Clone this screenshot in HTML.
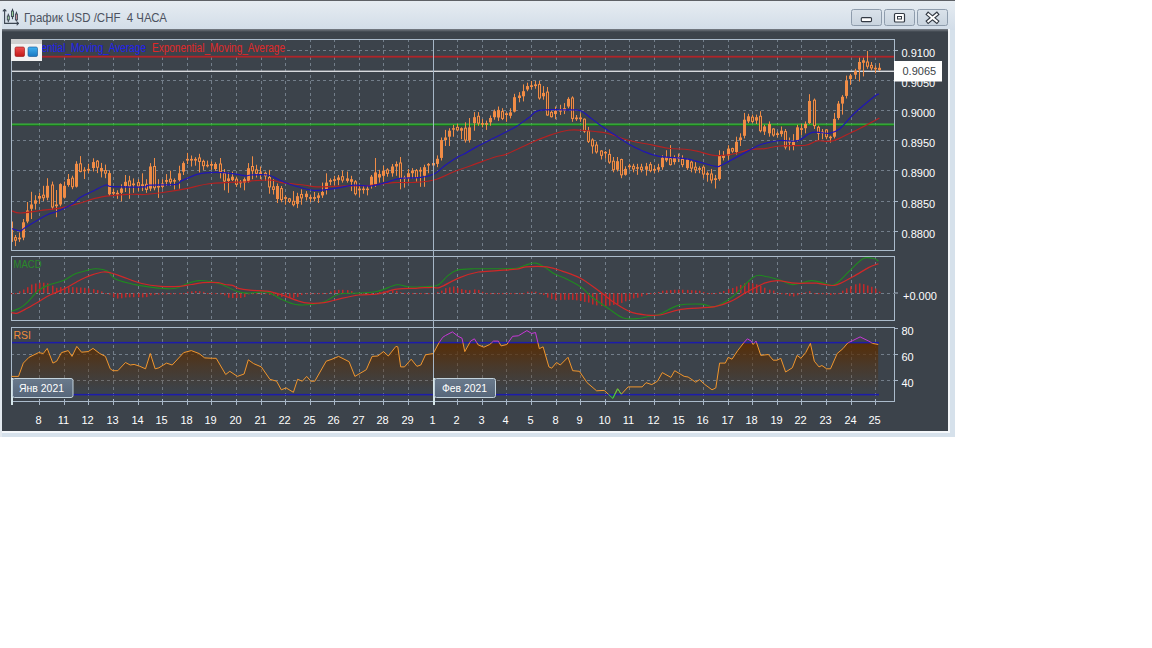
<!DOCTYPE html>
<html><head><meta charset="utf-8"><title>USD/CHF</title>
<style>html,body{margin:0;padding:0;background:#fff;width:1152px;height:648px;overflow:hidden;position:relative;font-family:"Liberation Sans", sans-serif}</style>
</head><body>
<svg width="1152" height="648" viewBox="0 0 1152 648" style="position:absolute;left:0;top:0;display:block"><defs><linearGradient id="tb" x1="0" y1="0" x2="0" y2="1"><stop offset="0" stop-color="#e6ecf2"/><stop offset="1" stop-color="#d2dde8"/></linearGradient><linearGradient id="btn" x1="0" y1="0" x2="0" y2="1"><stop offset="0" stop-color="#dae2ea"/><stop offset="1" stop-color="#c9d4df"/></linearGradient><linearGradient id="rsifill" gradientUnits="userSpaceOnUse" x1="0" y1="342" x2="0" y2="392"><stop offset="0" stop-color="#582e06" stop-opacity="1"/><stop offset="0.5" stop-color="#582e06" stop-opacity="0.45"/><stop offset="1" stop-color="#582e06" stop-opacity="0"/></linearGradient><linearGradient id="datebox" x1="0" y1="0" x2="0" y2="1"><stop offset="0" stop-color="#6a7a8c"/><stop offset="1" stop-color="#56667a"/></linearGradient><linearGradient id="shadow" x1="0" y1="0" x2="0" y2="1"><stop offset="0" stop-color="#7a8088"/><stop offset="1" stop-color="#3c434b"/></linearGradient><linearGradient id="redsq" x1="0" y1="0" x2="0" y2="1"><stop offset="0" stop-color="#f05050"/><stop offset="1" stop-color="#c01818"/></linearGradient><linearGradient id="bluesq" x1="0" y1="0" x2="0" y2="1"><stop offset="0" stop-color="#40b0f0"/><stop offset="1" stop-color="#1a78c0"/></linearGradient><clipPath id="mainclip"><rect x="12" y="39.5" width="883" height="211"/></clipPath><clipPath id="rsiclip"><rect x="12" y="342.6" width="883" height="58"/></clipPath></defs><rect x="0" y="0" width="1152" height="648" fill="#ffffff"/><rect x="0" y="0" width="955" height="437" fill="#d6e1eb"/><rect x="0" y="1" width="955" height="29" fill="url(#tb)"/><rect x="0" y="0" width="955" height="1" fill="#5e6166"/><rect x="0" y="1" width="2" height="436" fill="#e4eaf0"/><rect x="2" y="29" width="948" height="404" fill="#f4f7fa"/><rect x="2" y="29" width="946" height="402" fill="#3c434b"/><rect x="2" y="29" width="946" height="3" fill="url(#shadow)"/><line x1="39.5" y1="40" x2="39.5" y2="250" stroke="#737e8a" stroke-width="1" stroke-dasharray="3,3" stroke-dashoffset="1"/><line x1="64.5" y1="40" x2="64.5" y2="250" stroke="#737e8a" stroke-width="1" stroke-dasharray="3,3" stroke-dashoffset="1"/><line x1="88.5" y1="40" x2="88.5" y2="250" stroke="#737e8a" stroke-width="1" stroke-dasharray="3,3" stroke-dashoffset="1"/><line x1="113.5" y1="40" x2="113.5" y2="250" stroke="#737e8a" stroke-width="1" stroke-dasharray="3,3" stroke-dashoffset="1"/><line x1="138.5" y1="40" x2="138.5" y2="250" stroke="#737e8a" stroke-width="1" stroke-dasharray="3,3" stroke-dashoffset="1"/><line x1="162.5" y1="40" x2="162.5" y2="250" stroke="#737e8a" stroke-width="1" stroke-dasharray="3,3" stroke-dashoffset="1"/><line x1="187.5" y1="40" x2="187.5" y2="250" stroke="#737e8a" stroke-width="1" stroke-dasharray="3,3" stroke-dashoffset="1"/><line x1="211.5" y1="40" x2="211.5" y2="250" stroke="#737e8a" stroke-width="1" stroke-dasharray="3,3" stroke-dashoffset="1"/><line x1="236.5" y1="40" x2="236.5" y2="250" stroke="#737e8a" stroke-width="1" stroke-dasharray="3,3" stroke-dashoffset="1"/><line x1="261.5" y1="40" x2="261.5" y2="250" stroke="#737e8a" stroke-width="1" stroke-dasharray="3,3" stroke-dashoffset="1"/><line x1="285.5" y1="40" x2="285.5" y2="250" stroke="#737e8a" stroke-width="1" stroke-dasharray="3,3" stroke-dashoffset="1"/><line x1="310.5" y1="40" x2="310.5" y2="250" stroke="#737e8a" stroke-width="1" stroke-dasharray="3,3" stroke-dashoffset="1"/><line x1="334.5" y1="40" x2="334.5" y2="250" stroke="#737e8a" stroke-width="1" stroke-dasharray="3,3" stroke-dashoffset="1"/><line x1="359.5" y1="40" x2="359.5" y2="250" stroke="#737e8a" stroke-width="1" stroke-dasharray="3,3" stroke-dashoffset="1"/><line x1="383.5" y1="40" x2="383.5" y2="250" stroke="#737e8a" stroke-width="1" stroke-dasharray="3,3" stroke-dashoffset="1"/><line x1="408.5" y1="40" x2="408.5" y2="250" stroke="#737e8a" stroke-width="1" stroke-dasharray="3,3" stroke-dashoffset="1"/><line x1="433.5" y1="40" x2="433.5" y2="250" stroke="#737e8a" stroke-width="1" stroke-dasharray="3,3" stroke-dashoffset="1"/><line x1="457.5" y1="40" x2="457.5" y2="250" stroke="#737e8a" stroke-width="1" stroke-dasharray="3,3" stroke-dashoffset="1"/><line x1="482.5" y1="40" x2="482.5" y2="250" stroke="#737e8a" stroke-width="1" stroke-dasharray="3,3" stroke-dashoffset="1"/><line x1="506.5" y1="40" x2="506.5" y2="250" stroke="#737e8a" stroke-width="1" stroke-dasharray="3,3" stroke-dashoffset="1"/><line x1="531.5" y1="40" x2="531.5" y2="250" stroke="#737e8a" stroke-width="1" stroke-dasharray="3,3" stroke-dashoffset="1"/><line x1="556.5" y1="40" x2="556.5" y2="250" stroke="#737e8a" stroke-width="1" stroke-dasharray="3,3" stroke-dashoffset="1"/><line x1="580.5" y1="40" x2="580.5" y2="250" stroke="#737e8a" stroke-width="1" stroke-dasharray="3,3" stroke-dashoffset="1"/><line x1="605.5" y1="40" x2="605.5" y2="250" stroke="#737e8a" stroke-width="1" stroke-dasharray="3,3" stroke-dashoffset="1"/><line x1="629.5" y1="40" x2="629.5" y2="250" stroke="#737e8a" stroke-width="1" stroke-dasharray="3,3" stroke-dashoffset="1"/><line x1="654.5" y1="40" x2="654.5" y2="250" stroke="#737e8a" stroke-width="1" stroke-dasharray="3,3" stroke-dashoffset="1"/><line x1="679.5" y1="40" x2="679.5" y2="250" stroke="#737e8a" stroke-width="1" stroke-dasharray="3,3" stroke-dashoffset="1"/><line x1="703.5" y1="40" x2="703.5" y2="250" stroke="#737e8a" stroke-width="1" stroke-dasharray="3,3" stroke-dashoffset="1"/><line x1="728.5" y1="40" x2="728.5" y2="250" stroke="#737e8a" stroke-width="1" stroke-dasharray="3,3" stroke-dashoffset="1"/><line x1="752.5" y1="40" x2="752.5" y2="250" stroke="#737e8a" stroke-width="1" stroke-dasharray="3,3" stroke-dashoffset="1"/><line x1="777.5" y1="40" x2="777.5" y2="250" stroke="#737e8a" stroke-width="1" stroke-dasharray="3,3" stroke-dashoffset="1"/><line x1="801.5" y1="40" x2="801.5" y2="250" stroke="#737e8a" stroke-width="1" stroke-dasharray="3,3" stroke-dashoffset="1"/><line x1="826.5" y1="40" x2="826.5" y2="250" stroke="#737e8a" stroke-width="1" stroke-dasharray="3,3" stroke-dashoffset="1"/><line x1="851.5" y1="40" x2="851.5" y2="250" stroke="#737e8a" stroke-width="1" stroke-dasharray="3,3" stroke-dashoffset="1"/><line x1="875.5" y1="40" x2="875.5" y2="250" stroke="#737e8a" stroke-width="1" stroke-dasharray="3,3" stroke-dashoffset="1"/><line x1="12" y1="50.5" x2="895" y2="50.5" stroke="#737e8a" stroke-width="1" stroke-dasharray="3,3" stroke-dashoffset="1"/><line x1="12" y1="80.5" x2="895" y2="80.5" stroke="#737e8a" stroke-width="1" stroke-dasharray="3,3" stroke-dashoffset="1"/><line x1="12" y1="110.5" x2="895" y2="110.5" stroke="#737e8a" stroke-width="1" stroke-dasharray="3,3" stroke-dashoffset="1"/><line x1="12" y1="140.5" x2="895" y2="140.5" stroke="#737e8a" stroke-width="1" stroke-dasharray="3,3" stroke-dashoffset="1"/><line x1="12" y1="170.5" x2="895" y2="170.5" stroke="#737e8a" stroke-width="1" stroke-dasharray="3,3" stroke-dashoffset="1"/><line x1="12" y1="201.5" x2="895" y2="201.5" stroke="#737e8a" stroke-width="1" stroke-dasharray="3,3" stroke-dashoffset="1"/><line x1="12" y1="231.5" x2="895" y2="231.5" stroke="#737e8a" stroke-width="1" stroke-dasharray="3,3" stroke-dashoffset="1"/><line x1="39.5" y1="257" x2="39.5" y2="320" stroke="#737e8a" stroke-width="1" stroke-dasharray="3,3" stroke-dashoffset="1"/><line x1="64.5" y1="257" x2="64.5" y2="320" stroke="#737e8a" stroke-width="1" stroke-dasharray="3,3" stroke-dashoffset="1"/><line x1="88.5" y1="257" x2="88.5" y2="320" stroke="#737e8a" stroke-width="1" stroke-dasharray="3,3" stroke-dashoffset="1"/><line x1="113.5" y1="257" x2="113.5" y2="320" stroke="#737e8a" stroke-width="1" stroke-dasharray="3,3" stroke-dashoffset="1"/><line x1="138.5" y1="257" x2="138.5" y2="320" stroke="#737e8a" stroke-width="1" stroke-dasharray="3,3" stroke-dashoffset="1"/><line x1="162.5" y1="257" x2="162.5" y2="320" stroke="#737e8a" stroke-width="1" stroke-dasharray="3,3" stroke-dashoffset="1"/><line x1="187.5" y1="257" x2="187.5" y2="320" stroke="#737e8a" stroke-width="1" stroke-dasharray="3,3" stroke-dashoffset="1"/><line x1="211.5" y1="257" x2="211.5" y2="320" stroke="#737e8a" stroke-width="1" stroke-dasharray="3,3" stroke-dashoffset="1"/><line x1="236.5" y1="257" x2="236.5" y2="320" stroke="#737e8a" stroke-width="1" stroke-dasharray="3,3" stroke-dashoffset="1"/><line x1="261.5" y1="257" x2="261.5" y2="320" stroke="#737e8a" stroke-width="1" stroke-dasharray="3,3" stroke-dashoffset="1"/><line x1="285.5" y1="257" x2="285.5" y2="320" stroke="#737e8a" stroke-width="1" stroke-dasharray="3,3" stroke-dashoffset="1"/><line x1="310.5" y1="257" x2="310.5" y2="320" stroke="#737e8a" stroke-width="1" stroke-dasharray="3,3" stroke-dashoffset="1"/><line x1="334.5" y1="257" x2="334.5" y2="320" stroke="#737e8a" stroke-width="1" stroke-dasharray="3,3" stroke-dashoffset="1"/><line x1="359.5" y1="257" x2="359.5" y2="320" stroke="#737e8a" stroke-width="1" stroke-dasharray="3,3" stroke-dashoffset="1"/><line x1="383.5" y1="257" x2="383.5" y2="320" stroke="#737e8a" stroke-width="1" stroke-dasharray="3,3" stroke-dashoffset="1"/><line x1="408.5" y1="257" x2="408.5" y2="320" stroke="#737e8a" stroke-width="1" stroke-dasharray="3,3" stroke-dashoffset="1"/><line x1="433.5" y1="257" x2="433.5" y2="320" stroke="#737e8a" stroke-width="1" stroke-dasharray="3,3" stroke-dashoffset="1"/><line x1="457.5" y1="257" x2="457.5" y2="320" stroke="#737e8a" stroke-width="1" stroke-dasharray="3,3" stroke-dashoffset="1"/><line x1="482.5" y1="257" x2="482.5" y2="320" stroke="#737e8a" stroke-width="1" stroke-dasharray="3,3" stroke-dashoffset="1"/><line x1="506.5" y1="257" x2="506.5" y2="320" stroke="#737e8a" stroke-width="1" stroke-dasharray="3,3" stroke-dashoffset="1"/><line x1="531.5" y1="257" x2="531.5" y2="320" stroke="#737e8a" stroke-width="1" stroke-dasharray="3,3" stroke-dashoffset="1"/><line x1="556.5" y1="257" x2="556.5" y2="320" stroke="#737e8a" stroke-width="1" stroke-dasharray="3,3" stroke-dashoffset="1"/><line x1="580.5" y1="257" x2="580.5" y2="320" stroke="#737e8a" stroke-width="1" stroke-dasharray="3,3" stroke-dashoffset="1"/><line x1="605.5" y1="257" x2="605.5" y2="320" stroke="#737e8a" stroke-width="1" stroke-dasharray="3,3" stroke-dashoffset="1"/><line x1="629.5" y1="257" x2="629.5" y2="320" stroke="#737e8a" stroke-width="1" stroke-dasharray="3,3" stroke-dashoffset="1"/><line x1="654.5" y1="257" x2="654.5" y2="320" stroke="#737e8a" stroke-width="1" stroke-dasharray="3,3" stroke-dashoffset="1"/><line x1="679.5" y1="257" x2="679.5" y2="320" stroke="#737e8a" stroke-width="1" stroke-dasharray="3,3" stroke-dashoffset="1"/><line x1="703.5" y1="257" x2="703.5" y2="320" stroke="#737e8a" stroke-width="1" stroke-dasharray="3,3" stroke-dashoffset="1"/><line x1="728.5" y1="257" x2="728.5" y2="320" stroke="#737e8a" stroke-width="1" stroke-dasharray="3,3" stroke-dashoffset="1"/><line x1="752.5" y1="257" x2="752.5" y2="320" stroke="#737e8a" stroke-width="1" stroke-dasharray="3,3" stroke-dashoffset="1"/><line x1="777.5" y1="257" x2="777.5" y2="320" stroke="#737e8a" stroke-width="1" stroke-dasharray="3,3" stroke-dashoffset="1"/><line x1="801.5" y1="257" x2="801.5" y2="320" stroke="#737e8a" stroke-width="1" stroke-dasharray="3,3" stroke-dashoffset="1"/><line x1="826.5" y1="257" x2="826.5" y2="320" stroke="#737e8a" stroke-width="1" stroke-dasharray="3,3" stroke-dashoffset="1"/><line x1="851.5" y1="257" x2="851.5" y2="320" stroke="#737e8a" stroke-width="1" stroke-dasharray="3,3" stroke-dashoffset="1"/><line x1="875.5" y1="257" x2="875.5" y2="320" stroke="#737e8a" stroke-width="1" stroke-dasharray="3,3" stroke-dashoffset="1"/><line x1="39.5" y1="328" x2="39.5" y2="400" stroke="#737e8a" stroke-width="1" stroke-dasharray="3,3" stroke-dashoffset="1"/><line x1="64.5" y1="328" x2="64.5" y2="400" stroke="#737e8a" stroke-width="1" stroke-dasharray="3,3" stroke-dashoffset="1"/><line x1="88.5" y1="328" x2="88.5" y2="400" stroke="#737e8a" stroke-width="1" stroke-dasharray="3,3" stroke-dashoffset="1"/><line x1="113.5" y1="328" x2="113.5" y2="400" stroke="#737e8a" stroke-width="1" stroke-dasharray="3,3" stroke-dashoffset="1"/><line x1="138.5" y1="328" x2="138.5" y2="400" stroke="#737e8a" stroke-width="1" stroke-dasharray="3,3" stroke-dashoffset="1"/><line x1="162.5" y1="328" x2="162.5" y2="400" stroke="#737e8a" stroke-width="1" stroke-dasharray="3,3" stroke-dashoffset="1"/><line x1="187.5" y1="328" x2="187.5" y2="400" stroke="#737e8a" stroke-width="1" stroke-dasharray="3,3" stroke-dashoffset="1"/><line x1="211.5" y1="328" x2="211.5" y2="400" stroke="#737e8a" stroke-width="1" stroke-dasharray="3,3" stroke-dashoffset="1"/><line x1="236.5" y1="328" x2="236.5" y2="400" stroke="#737e8a" stroke-width="1" stroke-dasharray="3,3" stroke-dashoffset="1"/><line x1="261.5" y1="328" x2="261.5" y2="400" stroke="#737e8a" stroke-width="1" stroke-dasharray="3,3" stroke-dashoffset="1"/><line x1="285.5" y1="328" x2="285.5" y2="400" stroke="#737e8a" stroke-width="1" stroke-dasharray="3,3" stroke-dashoffset="1"/><line x1="310.5" y1="328" x2="310.5" y2="400" stroke="#737e8a" stroke-width="1" stroke-dasharray="3,3" stroke-dashoffset="1"/><line x1="334.5" y1="328" x2="334.5" y2="400" stroke="#737e8a" stroke-width="1" stroke-dasharray="3,3" stroke-dashoffset="1"/><line x1="359.5" y1="328" x2="359.5" y2="400" stroke="#737e8a" stroke-width="1" stroke-dasharray="3,3" stroke-dashoffset="1"/><line x1="383.5" y1="328" x2="383.5" y2="400" stroke="#737e8a" stroke-width="1" stroke-dasharray="3,3" stroke-dashoffset="1"/><line x1="408.5" y1="328" x2="408.5" y2="400" stroke="#737e8a" stroke-width="1" stroke-dasharray="3,3" stroke-dashoffset="1"/><line x1="433.5" y1="328" x2="433.5" y2="400" stroke="#737e8a" stroke-width="1" stroke-dasharray="3,3" stroke-dashoffset="1"/><line x1="457.5" y1="328" x2="457.5" y2="400" stroke="#737e8a" stroke-width="1" stroke-dasharray="3,3" stroke-dashoffset="1"/><line x1="482.5" y1="328" x2="482.5" y2="400" stroke="#737e8a" stroke-width="1" stroke-dasharray="3,3" stroke-dashoffset="1"/><line x1="506.5" y1="328" x2="506.5" y2="400" stroke="#737e8a" stroke-width="1" stroke-dasharray="3,3" stroke-dashoffset="1"/><line x1="531.5" y1="328" x2="531.5" y2="400" stroke="#737e8a" stroke-width="1" stroke-dasharray="3,3" stroke-dashoffset="1"/><line x1="556.5" y1="328" x2="556.5" y2="400" stroke="#737e8a" stroke-width="1" stroke-dasharray="3,3" stroke-dashoffset="1"/><line x1="580.5" y1="328" x2="580.5" y2="400" stroke="#737e8a" stroke-width="1" stroke-dasharray="3,3" stroke-dashoffset="1"/><line x1="605.5" y1="328" x2="605.5" y2="400" stroke="#737e8a" stroke-width="1" stroke-dasharray="3,3" stroke-dashoffset="1"/><line x1="629.5" y1="328" x2="629.5" y2="400" stroke="#737e8a" stroke-width="1" stroke-dasharray="3,3" stroke-dashoffset="1"/><line x1="654.5" y1="328" x2="654.5" y2="400" stroke="#737e8a" stroke-width="1" stroke-dasharray="3,3" stroke-dashoffset="1"/><line x1="679.5" y1="328" x2="679.5" y2="400" stroke="#737e8a" stroke-width="1" stroke-dasharray="3,3" stroke-dashoffset="1"/><line x1="703.5" y1="328" x2="703.5" y2="400" stroke="#737e8a" stroke-width="1" stroke-dasharray="3,3" stroke-dashoffset="1"/><line x1="728.5" y1="328" x2="728.5" y2="400" stroke="#737e8a" stroke-width="1" stroke-dasharray="3,3" stroke-dashoffset="1"/><line x1="752.5" y1="328" x2="752.5" y2="400" stroke="#737e8a" stroke-width="1" stroke-dasharray="3,3" stroke-dashoffset="1"/><line x1="777.5" y1="328" x2="777.5" y2="400" stroke="#737e8a" stroke-width="1" stroke-dasharray="3,3" stroke-dashoffset="1"/><line x1="801.5" y1="328" x2="801.5" y2="400" stroke="#737e8a" stroke-width="1" stroke-dasharray="3,3" stroke-dashoffset="1"/><line x1="826.5" y1="328" x2="826.5" y2="400" stroke="#737e8a" stroke-width="1" stroke-dasharray="3,3" stroke-dashoffset="1"/><line x1="851.5" y1="328" x2="851.5" y2="400" stroke="#737e8a" stroke-width="1" stroke-dasharray="3,3" stroke-dashoffset="1"/><line x1="875.5" y1="328" x2="875.5" y2="400" stroke="#737e8a" stroke-width="1" stroke-dasharray="3,3" stroke-dashoffset="1"/><line x1="12" y1="354.5" x2="895" y2="354.5" stroke="#737e8a" stroke-width="1" stroke-dasharray="3,3" stroke-dashoffset="1"/><line x1="12" y1="380.5" x2="895" y2="380.5" stroke="#737e8a" stroke-width="1" stroke-dasharray="3,3" stroke-dashoffset="1"/><rect x="12" y="55.8" width="883" height="1.8" fill="#b02428"/><rect x="12" y="70.6" width="883" height="1.4" fill="#d8dade"/><rect x="12" y="123.6" width="883" height="1.2" fill="#3ccc3c"/><rect x="12" y="124.8" width="883" height="0.9" fill="#127e12"/><g clip-path="url(#mainclip)"><rect x="11" y="219.8" width="1" height="23.8" fill="#f08c46"/><rect x="10" y="221.5" width="3" height="20.4" fill="#f08c46"/><rect x="15" y="235.0" width="1" height="11.1" fill="#f08c46"/><rect x="14.5" y="237.6" width="2" height="2.6" fill="none" stroke="#f08c46" stroke-width="1"/><rect x="15" y="238.1" width="1" height="1.6" fill="#5a4030"/><rect x="19" y="232.5" width="1" height="9.4" fill="#f08c46"/><rect x="18" y="237.6" width="3" height="1.7" fill="#f08c46"/><rect x="23" y="219.0" width="1" height="21.2" fill="#f08c46"/><rect x="22" y="222.3" width="3" height="15.3" fill="#f08c46"/><rect x="27" y="202.0" width="1" height="21.2" fill="#f08c46"/><rect x="26" y="210.5" width="3" height="11.0" fill="#f08c46"/><rect x="31" y="191.8" width="1" height="27.2" fill="#f08c46"/><rect x="30" y="204.5" width="3" height="4.3" fill="#f08c46"/><rect x="35" y="195.2" width="1" height="14.4" fill="#f08c46"/><rect x="34" y="200.3" width="3" height="3.4" fill="#f08c46"/><rect x="39" y="192.6" width="1" height="11.1" fill="#f08c46"/><rect x="38" y="196.0" width="3" height="2.6" fill="#f08c46"/><rect x="43" y="185.8" width="1" height="15.3" fill="#f08c46"/><rect x="42.5" y="195.2" width="2" height="2.5" fill="none" stroke="#f08c46" stroke-width="1"/><rect x="43" y="195.7" width="1" height="1.5" fill="#5a4030"/><rect x="47" y="178.2" width="1" height="22.1" fill="#f08c46"/><rect x="46" y="185.8" width="3" height="11.9" fill="#f08c46"/><rect x="52" y="181.6" width="1" height="28.0" fill="#f08c46"/><rect x="51.5" y="185.0" width="2" height="22.0" fill="none" stroke="#f08c46" stroke-width="1"/><rect x="52" y="185.5" width="1" height="21.0" fill="#5a4030"/><rect x="56" y="190.0" width="1" height="27.2" fill="#f08c46"/><rect x="55" y="204.5" width="3" height="1.7" fill="#f08c46"/><rect x="60" y="183.3" width="1" height="22.9" fill="#f08c46"/><rect x="59" y="184.1" width="3" height="20.4" fill="#f08c46"/><rect x="64" y="181.6" width="1" height="17.0" fill="#f08c46"/><rect x="63" y="185.8" width="3" height="11.9" fill="#f08c46"/><rect x="68" y="174.0" width="1" height="12.7" fill="#f08c46"/><rect x="67" y="179.0" width="3" height="6.0" fill="#f08c46"/><rect x="72" y="175.7" width="1" height="13.5" fill="#f08c46"/><rect x="71.5" y="178.2" width="2" height="8.5" fill="none" stroke="#f08c46" stroke-width="1"/><rect x="72" y="178.7" width="1" height="7.5" fill="#5a4030"/><rect x="76" y="161.2" width="1" height="26.3" fill="#f08c46"/><rect x="75" y="163.8" width="3" height="22.9" fill="#f08c46"/><rect x="80" y="156.1" width="1" height="16.2" fill="#f08c46"/><rect x="79.5" y="163.8" width="2" height="7.6" fill="none" stroke="#f08c46" stroke-width="1"/><rect x="80" y="164.3" width="1" height="6.6" fill="#5a4030"/><rect x="84" y="167.2" width="1" height="11.8" fill="#f08c46"/><rect x="83" y="169.7" width="3" height="1.5" fill="#f08c46"/><rect x="88" y="163.8" width="1" height="9.3" fill="#f08c46"/><rect x="87" y="168.9" width="3" height="1.7" fill="#f08c46"/><rect x="93" y="158.3" width="1" height="13.1" fill="#f08c46"/><rect x="92" y="162.1" width="3" height="5.9" fill="#f08c46"/><rect x="97" y="160.0" width="1" height="13.1" fill="#f08c46"/><rect x="96.5" y="161.2" width="2" height="6.0" fill="none" stroke="#f08c46" stroke-width="1"/><rect x="97" y="161.7" width="1" height="5.0" fill="#5a4030"/><rect x="101" y="162.9" width="1" height="14.5" fill="#f08c46"/><rect x="100" y="168.0" width="3" height="3.4" fill="#f08c46"/><rect x="105" y="164.6" width="1" height="13.6" fill="#f08c46"/><rect x="104.5" y="170.6" width="2" height="2.5" fill="none" stroke="#f08c46" stroke-width="1"/><rect x="105" y="171.1" width="1" height="1.5" fill="#5a4030"/><rect x="109" y="170.6" width="1" height="25.4" fill="#f08c46"/><rect x="108" y="173.1" width="3" height="21.2" fill="#f08c46"/><rect x="113" y="188.6" width="1" height="6.8" fill="#f08c46"/><rect x="112" y="192.0" width="3" height="1.7" fill="#f08c46"/><rect x="117" y="190.3" width="1" height="8.5" fill="#f08c46"/><rect x="116" y="192.8" width="3" height="1.7" fill="#f08c46"/><rect x="121" y="184.3" width="1" height="17.0" fill="#f08c46"/><rect x="120" y="188.6" width="3" height="4.2" fill="#f08c46"/><rect x="125" y="175.0" width="1" height="17.0" fill="#f08c46"/><rect x="124" y="181.8" width="3" height="4.2" fill="#f08c46"/><rect x="129" y="175.8" width="1" height="23.0" fill="#f08c46"/><rect x="128.5" y="181.0" width="2" height="5.0" fill="none" stroke="#f08c46" stroke-width="1"/><rect x="129" y="181.5" width="1" height="4.0" fill="#5a4030"/><rect x="133" y="178.4" width="1" height="14.4" fill="#f08c46"/><rect x="132" y="183.5" width="3" height="1.7" fill="#f08c46"/><rect x="138" y="179.2" width="1" height="11.9" fill="#f08c46"/><rect x="137.5" y="182.6" width="2" height="3.4" fill="none" stroke="#f08c46" stroke-width="1"/><rect x="138" y="183.1" width="1" height="2.4" fill="#5a4030"/><rect x="142" y="173.3" width="1" height="17.8" fill="#f08c46"/><rect x="141" y="184.3" width="3" height="1.7" fill="#f08c46"/><rect x="146" y="179.2" width="1" height="13.6" fill="#f08c46"/><rect x="145.5" y="184.3" width="2" height="5.1" fill="none" stroke="#f08c46" stroke-width="1"/><rect x="146" y="184.8" width="1" height="4.1" fill="#5a4030"/><rect x="150" y="163.1" width="1" height="28.0" fill="#f08c46"/><rect x="149" y="166.5" width="3" height="22.1" fill="#f08c46"/><rect x="154" y="158.0" width="1" height="32.3" fill="#f08c46"/><rect x="153.5" y="166.5" width="2" height="21.2" fill="none" stroke="#f08c46" stroke-width="1"/><rect x="154" y="167.0" width="1" height="20.2" fill="#5a4030"/><rect x="158" y="179.2" width="1" height="18.7" fill="#f08c46"/><rect x="157" y="186.0" width="3" height="1.5" fill="#f08c46"/><rect x="162" y="179.2" width="1" height="9.4" fill="#f08c46"/><rect x="161" y="183.5" width="3" height="3.4" fill="#f08c46"/><rect x="166" y="174.1" width="1" height="11.9" fill="#f08c46"/><rect x="165" y="180.1" width="3" height="1.7" fill="#f08c46"/><rect x="170" y="170.7" width="1" height="15.3" fill="#f08c46"/><rect x="169.5" y="179.2" width="2" height="2.6" fill="none" stroke="#f08c46" stroke-width="1"/><rect x="170" y="179.7" width="1" height="1.6" fill="#5a4030"/><rect x="174" y="178.4" width="1" height="11.0" fill="#f08c46"/><rect x="173" y="180.1" width="3" height="1.5" fill="#f08c46"/><rect x="179" y="165.7" width="1" height="22.9" fill="#f08c46"/><rect x="178" y="173.3" width="3" height="6.8" fill="#f08c46"/><rect x="183" y="161.4" width="1" height="13.6" fill="#f08c46"/><rect x="182" y="163.1" width="3" height="8.5" fill="#f08c46"/><rect x="187" y="152.9" width="1" height="11.1" fill="#f08c46"/><rect x="186" y="158.9" width="3" height="1.7" fill="#f08c46"/><rect x="191" y="155.5" width="1" height="11.0" fill="#f08c46"/><rect x="190" y="158.9" width="3" height="1.7" fill="#f08c46"/><rect x="195" y="157.2" width="1" height="8.5" fill="#f08c46"/><rect x="194" y="158.9" width="3" height="1.7" fill="#f08c46"/><rect x="199" y="153.8" width="1" height="18.6" fill="#f08c46"/><rect x="198.5" y="158.0" width="2" height="3.4" fill="none" stroke="#f08c46" stroke-width="1"/><rect x="199" y="158.5" width="1" height="2.4" fill="#5a4030"/><rect x="203" y="159.7" width="1" height="10.2" fill="#f08c46"/><rect x="202.5" y="161.4" width="2" height="4.3" fill="none" stroke="#f08c46" stroke-width="1"/><rect x="203" y="161.9" width="1" height="3.3" fill="#5a4030"/><rect x="207" y="160.6" width="1" height="6.8" fill="#f08c46"/><rect x="206" y="164.8" width="3" height="1.5" fill="#f08c46"/><rect x="211" y="161.4" width="1" height="8.5" fill="#f08c46"/><rect x="210" y="164.0" width="3" height="1.7" fill="#f08c46"/><rect x="215" y="162.3" width="1" height="8.4" fill="#f08c46"/><rect x="214" y="164.0" width="3" height="5.0" fill="#f08c46"/><rect x="220" y="158.0" width="1" height="20.4" fill="#f08c46"/><rect x="219.5" y="164.0" width="2" height="7.6" fill="none" stroke="#f08c46" stroke-width="1"/><rect x="220" y="164.5" width="1" height="6.6" fill="#5a4030"/><rect x="224" y="169.0" width="1" height="21.3" fill="#f08c46"/><rect x="223.5" y="173.3" width="2" height="7.7" fill="none" stroke="#f08c46" stroke-width="1"/><rect x="224" y="173.8" width="1" height="6.7" fill="#5a4030"/><rect x="228" y="172.4" width="1" height="20.4" fill="#f08c46"/><rect x="227" y="178.4" width="3" height="2.6" fill="#f08c46"/><rect x="232" y="171.6" width="1" height="9.4" fill="#f08c46"/><rect x="231" y="176.7" width="3" height="3.4" fill="#f08c46"/><rect x="236" y="176.7" width="1" height="10.2" fill="#f08c46"/><rect x="235.5" y="179.2" width="2" height="5.1" fill="none" stroke="#f08c46" stroke-width="1"/><rect x="236" y="179.7" width="1" height="4.1" fill="#5a4030"/><rect x="240" y="180.1" width="1" height="7.6" fill="#f08c46"/><rect x="239" y="181.8" width="3" height="1.5" fill="#f08c46"/><rect x="244" y="177.5" width="1" height="12.8" fill="#f08c46"/><rect x="243" y="179.2" width="3" height="3.4" fill="#f08c46"/><rect x="248" y="163.1" width="1" height="19.5" fill="#f08c46"/><rect x="247" y="168.2" width="3" height="12.7" fill="#f08c46"/><rect x="252" y="156.3" width="1" height="22.9" fill="#f08c46"/><rect x="251.5" y="166.5" width="2" height="4.2" fill="none" stroke="#f08c46" stroke-width="1"/><rect x="252" y="167.0" width="1" height="3.2" fill="#5a4030"/><rect x="256" y="164.8" width="1" height="12.7" fill="#f08c46"/><rect x="255.5" y="169.9" width="2" height="3.4" fill="none" stroke="#f08c46" stroke-width="1"/><rect x="256" y="170.4" width="1" height="2.4" fill="#5a4030"/><rect x="260" y="166.5" width="1" height="12.7" fill="#f08c46"/><rect x="259" y="172.4" width="3" height="1.7" fill="#f08c46"/><rect x="265" y="171.6" width="1" height="9.3" fill="#f08c46"/><rect x="264.5" y="173.3" width="2" height="2.5" fill="none" stroke="#f08c46" stroke-width="1"/><rect x="265" y="173.8" width="1" height="1.5" fill="#5a4030"/><rect x="269" y="169.9" width="1" height="23.8" fill="#f08c46"/><rect x="268.5" y="177.5" width="2" height="9.4" fill="none" stroke="#f08c46" stroke-width="1"/><rect x="269" y="178.0" width="1" height="8.4" fill="#5a4030"/><rect x="273" y="179.2" width="1" height="15.3" fill="#f08c46"/><rect x="272.5" y="186.9" width="2" height="2.5" fill="none" stroke="#f08c46" stroke-width="1"/><rect x="273" y="187.4" width="1" height="1.5" fill="#5a4030"/><rect x="277" y="183.5" width="1" height="19.5" fill="#f08c46"/><rect x="276" y="186.0" width="3" height="13.0" fill="#f08c46"/><rect x="281" y="186.0" width="1" height="16.2" fill="#f08c46"/><rect x="280.5" y="188.6" width="2" height="11.0" fill="none" stroke="#f08c46" stroke-width="1"/><rect x="281" y="189.1" width="1" height="10.0" fill="#5a4030"/><rect x="285" y="195.4" width="1" height="9.3" fill="#f08c46"/><rect x="284" y="197.1" width="3" height="1.7" fill="#f08c46"/><rect x="289" y="197.9" width="1" height="5.1" fill="#f08c46"/><rect x="288.5" y="198.8" width="2" height="2.5" fill="none" stroke="#f08c46" stroke-width="1"/><rect x="289" y="199.3" width="1" height="1.5" fill="#5a4030"/><rect x="293" y="191.1" width="1" height="15.3" fill="#f08c46"/><rect x="292.5" y="201.3" width="2" height="3.4" fill="none" stroke="#f08c46" stroke-width="1"/><rect x="293" y="201.8" width="1" height="2.4" fill="#5a4030"/><rect x="297" y="192.8" width="1" height="15.3" fill="#f08c46"/><rect x="296" y="196.2" width="3" height="7.7" fill="#f08c46"/><rect x="301" y="189.4" width="1" height="15.3" fill="#f08c46"/><rect x="300.5" y="194.5" width="2" height="3.4" fill="none" stroke="#f08c46" stroke-width="1"/><rect x="301" y="195.0" width="1" height="2.4" fill="#5a4030"/><rect x="306" y="191.1" width="1" height="9.4" fill="#f08c46"/><rect x="305" y="193.7" width="3" height="3.4" fill="#f08c46"/><rect x="310" y="194.5" width="1" height="7.7" fill="#f08c46"/><rect x="309" y="197.1" width="3" height="1.7" fill="#f08c46"/><rect x="314" y="192.0" width="1" height="9.3" fill="#f08c46"/><rect x="313" y="197.1" width="3" height="1.7" fill="#f08c46"/><rect x="318" y="192.8" width="1" height="10.2" fill="#f08c46"/><rect x="317" y="195.4" width="3" height="2.5" fill="#f08c46"/><rect x="322" y="182.6" width="1" height="15.3" fill="#f08c46"/><rect x="321" y="192.0" width="3" height="3.4" fill="#f08c46"/><rect x="326" y="173.3" width="1" height="21.2" fill="#f08c46"/><rect x="325" y="182.6" width="3" height="6.8" fill="#f08c46"/><rect x="330" y="178.4" width="1" height="6.8" fill="#f08c46"/><rect x="329" y="180.1" width="3" height="1.7" fill="#f08c46"/><rect x="334" y="175.8" width="1" height="9.4" fill="#f08c46"/><rect x="333" y="179.2" width="3" height="1.7" fill="#f08c46"/><rect x="338" y="175.0" width="1" height="10.2" fill="#f08c46"/><rect x="337" y="177.5" width="3" height="2.6" fill="#f08c46"/><rect x="342" y="170.7" width="1" height="11.9" fill="#f08c46"/><rect x="341.5" y="176.7" width="2" height="3.4" fill="none" stroke="#f08c46" stroke-width="1"/><rect x="342" y="177.2" width="1" height="2.4" fill="#5a4030"/><rect x="347" y="171.6" width="1" height="11.0" fill="#f08c46"/><rect x="346" y="178.4" width="3" height="2.5" fill="#f08c46"/><rect x="351" y="175.8" width="1" height="15.3" fill="#f08c46"/><rect x="350" y="179.2" width="3" height="2.6" fill="#f08c46"/><rect x="355" y="180.1" width="1" height="15.3" fill="#f08c46"/><rect x="354.5" y="181.8" width="2" height="11.9" fill="none" stroke="#f08c46" stroke-width="1"/><rect x="355" y="182.3" width="1" height="10.9" fill="#5a4030"/><rect x="359" y="185.2" width="1" height="11.9" fill="#f08c46"/><rect x="358" y="188.6" width="3" height="1.7" fill="#f08c46"/><rect x="363" y="186.0" width="1" height="7.7" fill="#f08c46"/><rect x="362" y="188.6" width="3" height="1.5" fill="#f08c46"/><rect x="367" y="185.2" width="1" height="10.2" fill="#f08c46"/><rect x="366" y="188.6" width="3" height="1.5" fill="#f08c46"/><rect x="371" y="175.0" width="1" height="13.6" fill="#f08c46"/><rect x="370" y="176.7" width="3" height="9.3" fill="#f08c46"/><rect x="375" y="158.0" width="1" height="28.9" fill="#f08c46"/><rect x="374" y="172.4" width="3" height="11.9" fill="#f08c46"/><rect x="379" y="169.9" width="1" height="12.7" fill="#f08c46"/><rect x="378" y="174.1" width="3" height="3.4" fill="#f08c46"/><rect x="383" y="165.7" width="1" height="16.1" fill="#f08c46"/><rect x="382" y="170.7" width="3" height="5.1" fill="#f08c46"/><rect x="387" y="168.2" width="1" height="8.5" fill="#f08c46"/><rect x="386.5" y="169.9" width="2" height="3.4" fill="none" stroke="#f08c46" stroke-width="1"/><rect x="387" y="170.4" width="1" height="2.4" fill="#5a4030"/><rect x="392" y="164.0" width="1" height="12.7" fill="#f08c46"/><rect x="391" y="166.5" width="3" height="6.8" fill="#f08c46"/><rect x="396" y="161.4" width="1" height="14.4" fill="#f08c46"/><rect x="395" y="164.0" width="3" height="2.5" fill="#f08c46"/><rect x="400" y="157.0" width="1" height="32.3" fill="#f08c46"/><rect x="399.5" y="163.0" width="2" height="15.3" fill="none" stroke="#f08c46" stroke-width="1"/><rect x="400" y="163.5" width="1" height="14.3" fill="#5a4030"/><rect x="404" y="175.7" width="1" height="11.9" fill="#f08c46"/><rect x="403" y="177.4" width="3" height="1.7" fill="#f08c46"/><rect x="408" y="169.0" width="1" height="12.7" fill="#f08c46"/><rect x="407" y="173.2" width="3" height="5.1" fill="#f08c46"/><rect x="412" y="168.1" width="1" height="10.2" fill="#f08c46"/><rect x="411" y="170.6" width="3" height="2.6" fill="#f08c46"/><rect x="416" y="169.0" width="1" height="12.7" fill="#f08c46"/><rect x="415.5" y="170.6" width="2" height="6.8" fill="none" stroke="#f08c46" stroke-width="1"/><rect x="416" y="171.1" width="1" height="5.8" fill="#5a4030"/><rect x="420" y="167.2" width="1" height="19.6" fill="#f08c46"/><rect x="419" y="169.8" width="3" height="1.7" fill="#f08c46"/><rect x="424" y="164.7" width="1" height="22.1" fill="#f08c46"/><rect x="423" y="167.2" width="3" height="8.5" fill="#f08c46"/><rect x="428" y="163.0" width="1" height="10.2" fill="#f08c46"/><rect x="427" y="163.9" width="3" height="1.6" fill="#f08c46"/><rect x="433" y="157.9" width="1" height="9.3" fill="#f08c46"/><rect x="432" y="163.0" width="3" height="2.5" fill="#f08c46"/><rect x="437" y="155.4" width="1" height="11.8" fill="#f08c46"/><rect x="436" y="158.8" width="3" height="5.1" fill="#f08c46"/><rect x="441" y="137.5" width="1" height="23.0" fill="#f08c46"/><rect x="440" y="140.1" width="3" height="17.8" fill="#f08c46"/><rect x="445" y="129.9" width="1" height="16.1" fill="#f08c46"/><rect x="444" y="137.5" width="3" height="2.6" fill="#f08c46"/><rect x="449" y="128.2" width="1" height="17.8" fill="#f08c46"/><rect x="448" y="130.7" width="3" height="6.0" fill="#f08c46"/><rect x="453" y="124.8" width="1" height="11.9" fill="#f08c46"/><rect x="452" y="128.2" width="3" height="1.5" fill="#f08c46"/><rect x="457" y="124.0" width="1" height="6.7" fill="#f08c46"/><rect x="456.5" y="127.4" width="2" height="2.5" fill="none" stroke="#f08c46" stroke-width="1"/><rect x="457" y="127.9" width="1" height="1.5" fill="#5a4030"/><rect x="461" y="127.4" width="1" height="11.8" fill="#f08c46"/><rect x="460" y="128.2" width="3" height="2.5" fill="#f08c46"/><rect x="465" y="122.3" width="1" height="20.3" fill="#f08c46"/><rect x="464.5" y="128.2" width="2" height="11.9" fill="none" stroke="#f08c46" stroke-width="1"/><rect x="465" y="128.7" width="1" height="10.9" fill="#5a4030"/><rect x="469" y="118.0" width="1" height="24.6" fill="#f08c46"/><rect x="468" y="127.4" width="3" height="12.7" fill="#f08c46"/><rect x="474" y="112.1" width="1" height="18.6" fill="#f08c46"/><rect x="473" y="117.2" width="3" height="5.9" fill="#f08c46"/><rect x="478" y="112.1" width="1" height="13.6" fill="#f08c46"/><rect x="477.5" y="116.3" width="2" height="6.8" fill="none" stroke="#f08c46" stroke-width="1"/><rect x="478" y="116.8" width="1" height="5.8" fill="#5a4030"/><rect x="482" y="118.9" width="1" height="8.5" fill="#f08c46"/><rect x="481" y="123.1" width="3" height="1.7" fill="#f08c46"/><rect x="486" y="120.6" width="1" height="9.3" fill="#f08c46"/><rect x="485" y="123.1" width="3" height="1.7" fill="#f08c46"/><rect x="490" y="115.5" width="1" height="10.2" fill="#f08c46"/><rect x="489" y="118.0" width="3" height="4.3" fill="#f08c46"/><rect x="494" y="109.5" width="1" height="10.2" fill="#f08c46"/><rect x="493" y="111.2" width="3" height="6.0" fill="#f08c46"/><rect x="498" y="106.5" width="1" height="14.4" fill="#f08c46"/><rect x="497" y="109.9" width="3" height="7.6" fill="#f08c46"/><rect x="502" y="108.2" width="1" height="11.9" fill="#f08c46"/><rect x="501.5" y="111.6" width="2" height="6.8" fill="none" stroke="#f08c46" stroke-width="1"/><rect x="502" y="112.1" width="1" height="5.8" fill="#5a4030"/><rect x="506" y="112.4" width="1" height="9.4" fill="#f08c46"/><rect x="505" y="113.3" width="3" height="1.7" fill="#f08c46"/><rect x="510" y="108.2" width="1" height="10.2" fill="#f08c46"/><rect x="509" y="112.4" width="3" height="3.4" fill="#f08c46"/><rect x="514" y="93.8" width="1" height="18.6" fill="#f08c46"/><rect x="513" y="97.2" width="3" height="14.4" fill="#f08c46"/><rect x="519" y="92.1" width="1" height="10.2" fill="#f08c46"/><rect x="518" y="95.5" width="3" height="2.5" fill="#f08c46"/><rect x="523" y="84.4" width="1" height="17.0" fill="#f08c46"/><rect x="522" y="91.2" width="3" height="5.1" fill="#f08c46"/><rect x="527" y="82.7" width="1" height="8.5" fill="#f08c46"/><rect x="526" y="86.1" width="3" height="3.4" fill="#f08c46"/><rect x="531" y="81.0" width="1" height="8.5" fill="#f08c46"/><rect x="530" y="85.3" width="3" height="1.7" fill="#f08c46"/><rect x="535" y="81.0" width="1" height="7.7" fill="#f08c46"/><rect x="534" y="84.4" width="3" height="1.7" fill="#f08c46"/><rect x="539" y="81.0" width="1" height="18.7" fill="#f08c46"/><rect x="538.5" y="84.4" width="2" height="13.6" fill="none" stroke="#f08c46" stroke-width="1"/><rect x="539" y="84.9" width="1" height="12.6" fill="#5a4030"/><rect x="543" y="86.1" width="1" height="13.6" fill="#f08c46"/><rect x="542" y="92.9" width="3" height="3.4" fill="#f08c46"/><rect x="547" y="87.0" width="1" height="28.8" fill="#f08c46"/><rect x="546.5" y="92.1" width="2" height="22.9" fill="none" stroke="#f08c46" stroke-width="1"/><rect x="547" y="92.6" width="1" height="21.9" fill="#5a4030"/><rect x="551" y="110.7" width="1" height="6.8" fill="#f08c46"/><rect x="550.5" y="112.4" width="2" height="4.3" fill="none" stroke="#f08c46" stroke-width="1"/><rect x="551" y="112.9" width="1" height="3.3" fill="#5a4030"/><rect x="555" y="106.5" width="1" height="12.7" fill="#f08c46"/><rect x="554" y="110.7" width="3" height="3.4" fill="#f08c46"/><rect x="560" y="104.8" width="1" height="10.2" fill="#f08c46"/><rect x="559" y="109.0" width="3" height="2.6" fill="#f08c46"/><rect x="564" y="103.1" width="1" height="11.0" fill="#f08c46"/><rect x="563" y="108.2" width="3" height="2.5" fill="#f08c46"/><rect x="568" y="97.2" width="1" height="11.0" fill="#f08c46"/><rect x="567" y="98.9" width="3" height="7.6" fill="#f08c46"/><rect x="572" y="96.3" width="1" height="25.5" fill="#f08c46"/><rect x="571.5" y="98.0" width="2" height="20.4" fill="none" stroke="#f08c46" stroke-width="1"/><rect x="572" y="98.5" width="1" height="19.4" fill="#5a4030"/><rect x="576" y="115.0" width="1" height="5.9" fill="#f08c46"/><rect x="575" y="117.5" width="3" height="1.7" fill="#f08c46"/><rect x="580" y="113.3" width="1" height="8.5" fill="#f08c46"/><rect x="579" y="117.5" width="3" height="1.7" fill="#f08c46"/><rect x="584" y="118.4" width="1" height="14.4" fill="#f08c46"/><rect x="583.5" y="119.2" width="2" height="11.9" fill="none" stroke="#f08c46" stroke-width="1"/><rect x="584" y="119.7" width="1" height="10.9" fill="#5a4030"/><rect x="588" y="126.9" width="1" height="16.1" fill="#f08c46"/><rect x="587.5" y="131.1" width="2" height="10.2" fill="none" stroke="#f08c46" stroke-width="1"/><rect x="588" y="131.6" width="1" height="9.2" fill="#5a4030"/><rect x="592" y="138.3" width="1" height="15.3" fill="#f08c46"/><rect x="591.5" y="140.0" width="2" height="5.9" fill="none" stroke="#f08c46" stroke-width="1"/><rect x="592" y="140.5" width="1" height="4.9" fill="#5a4030"/><rect x="596" y="141.7" width="1" height="11.9" fill="#f08c46"/><rect x="595.5" y="145.1" width="2" height="6.8" fill="none" stroke="#f08c46" stroke-width="1"/><rect x="596" y="145.6" width="1" height="5.8" fill="#5a4030"/><rect x="601" y="150.2" width="1" height="9.3" fill="#f08c46"/><rect x="600.5" y="151.0" width="2" height="4.3" fill="none" stroke="#f08c46" stroke-width="1"/><rect x="601" y="151.5" width="1" height="3.3" fill="#5a4030"/><rect x="605" y="151.0" width="1" height="7.7" fill="#f08c46"/><rect x="604" y="151.9" width="3" height="1.5" fill="#f08c46"/><rect x="609" y="149.3" width="1" height="14.5" fill="#f08c46"/><rect x="608.5" y="154.4" width="2" height="7.7" fill="none" stroke="#f08c46" stroke-width="1"/><rect x="609" y="154.9" width="1" height="6.7" fill="#5a4030"/><rect x="613" y="157.0" width="1" height="15.3" fill="#f08c46"/><rect x="612.5" y="161.2" width="2" height="8.5" fill="none" stroke="#f08c46" stroke-width="1"/><rect x="613" y="161.7" width="1" height="7.5" fill="#5a4030"/><rect x="617" y="157.0" width="1" height="14.4" fill="#f08c46"/><rect x="616" y="161.2" width="3" height="8.5" fill="#f08c46"/><rect x="621" y="158.7" width="1" height="19.5" fill="#f08c46"/><rect x="620.5" y="159.5" width="2" height="15.3" fill="none" stroke="#f08c46" stroke-width="1"/><rect x="621" y="160.0" width="1" height="14.3" fill="#5a4030"/><rect x="625" y="166.3" width="1" height="9.3" fill="#f08c46"/><rect x="624" y="168.9" width="3" height="5.9" fill="#f08c46"/><rect x="629" y="163.8" width="1" height="5.9" fill="#f08c46"/><rect x="628" y="165.5" width="3" height="1.7" fill="#f08c46"/><rect x="633" y="163.8" width="1" height="8.5" fill="#f08c46"/><rect x="632.5" y="166.3" width="2" height="2.6" fill="none" stroke="#f08c46" stroke-width="1"/><rect x="633" y="166.8" width="1" height="1.6" fill="#5a4030"/><rect x="637" y="163.8" width="1" height="11.0" fill="#f08c46"/><rect x="636" y="167.2" width="3" height="1.5" fill="#f08c46"/><rect x="641" y="163.8" width="1" height="8.5" fill="#f08c46"/><rect x="640.5" y="167.2" width="2" height="2.5" fill="none" stroke="#f08c46" stroke-width="1"/><rect x="641" y="167.7" width="1" height="1.5" fill="#5a4030"/><rect x="646" y="162.9" width="1" height="12.7" fill="#f08c46"/><rect x="645" y="166.3" width="3" height="3.4" fill="#f08c46"/><rect x="650" y="162.1" width="1" height="10.2" fill="#f08c46"/><rect x="649.5" y="164.6" width="2" height="6.0" fill="none" stroke="#f08c46" stroke-width="1"/><rect x="650" y="165.1" width="1" height="5.0" fill="#5a4030"/><rect x="654" y="165.5" width="1" height="7.6" fill="#f08c46"/><rect x="653" y="168.9" width="3" height="1.5" fill="#f08c46"/><rect x="658" y="163.8" width="1" height="8.5" fill="#f08c46"/><rect x="657" y="167.2" width="3" height="2.5" fill="#f08c46"/><rect x="662" y="155.3" width="1" height="14.4" fill="#f08c46"/><rect x="661" y="157.8" width="3" height="9.4" fill="#f08c46"/><rect x="666" y="150.2" width="1" height="11.9" fill="#f08c46"/><rect x="665" y="157.0" width="3" height="3.4" fill="#f08c46"/><rect x="670" y="145.1" width="1" height="20.4" fill="#f08c46"/><rect x="669.5" y="158.7" width="2" height="5.9" fill="none" stroke="#f08c46" stroke-width="1"/><rect x="670" y="159.2" width="1" height="4.9" fill="#5a4030"/><rect x="674" y="155.3" width="1" height="9.3" fill="#f08c46"/><rect x="673" y="157.8" width="3" height="4.3" fill="#f08c46"/><rect x="678" y="153.6" width="1" height="8.5" fill="#f08c46"/><rect x="677" y="157.0" width="3" height="1.7" fill="#f08c46"/><rect x="682" y="155.3" width="1" height="11.9" fill="#f08c46"/><rect x="681.5" y="159.5" width="2" height="5.1" fill="none" stroke="#f08c46" stroke-width="1"/><rect x="682" y="160.0" width="1" height="4.1" fill="#5a4030"/><rect x="687" y="158.8" width="1" height="11.0" fill="#f08c46"/><rect x="686" y="159.6" width="3" height="8.5" fill="#f08c46"/><rect x="691" y="160.5" width="1" height="11.8" fill="#f08c46"/><rect x="690.5" y="162.2" width="2" height="5.9" fill="none" stroke="#f08c46" stroke-width="1"/><rect x="691" y="162.7" width="1" height="4.9" fill="#5a4030"/><rect x="695" y="162.2" width="1" height="11.0" fill="#f08c46"/><rect x="694.5" y="167.2" width="2" height="2.6" fill="none" stroke="#f08c46" stroke-width="1"/><rect x="695" y="167.7" width="1" height="1.6" fill="#5a4030"/><rect x="699" y="166.4" width="1" height="6.8" fill="#f08c46"/><rect x="698" y="168.1" width="3" height="1.7" fill="#f08c46"/><rect x="703" y="165.5" width="1" height="12.8" fill="#f08c46"/><rect x="702.5" y="167.2" width="2" height="6.8" fill="none" stroke="#f08c46" stroke-width="1"/><rect x="703" y="167.7" width="1" height="5.8" fill="#5a4030"/><rect x="707" y="171.5" width="1" height="10.2" fill="#f08c46"/><rect x="706" y="173.2" width="3" height="1.7" fill="#f08c46"/><rect x="711" y="168.9" width="1" height="14.5" fill="#f08c46"/><rect x="710.5" y="174.0" width="2" height="6.0" fill="none" stroke="#f08c46" stroke-width="1"/><rect x="711" y="174.5" width="1" height="5.0" fill="#5a4030"/><rect x="715" y="174.9" width="1" height="13.6" fill="#f08c46"/><rect x="714" y="178.3" width="3" height="1.7" fill="#f08c46"/><rect x="719" y="150.3" width="1" height="30.5" fill="#f08c46"/><rect x="718" y="155.4" width="3" height="23.7" fill="#f08c46"/><rect x="723" y="151.1" width="1" height="9.4" fill="#f08c46"/><rect x="722" y="155.4" width="3" height="2.5" fill="#f08c46"/><rect x="728" y="145.2" width="1" height="14.4" fill="#f08c46"/><rect x="727" y="148.6" width="3" height="6.8" fill="#f08c46"/><rect x="732" y="147.7" width="1" height="5.1" fill="#f08c46"/><rect x="731.5" y="148.6" width="2" height="2.5" fill="none" stroke="#f08c46" stroke-width="1"/><rect x="732" y="149.1" width="1" height="1.5" fill="#5a4030"/><rect x="736" y="136.7" width="1" height="17.8" fill="#f08c46"/><rect x="735" y="141.8" width="3" height="10.2" fill="#f08c46"/><rect x="740" y="133.3" width="1" height="12.7" fill="#f08c46"/><rect x="739" y="137.5" width="3" height="2.6" fill="#f08c46"/><rect x="744" y="112.9" width="1" height="25.5" fill="#f08c46"/><rect x="743" y="119.7" width="3" height="16.1" fill="#f08c46"/><rect x="748" y="113.8" width="1" height="9.3" fill="#f08c46"/><rect x="747" y="116.3" width="3" height="5.1" fill="#f08c46"/><rect x="752" y="114.6" width="1" height="8.5" fill="#f08c46"/><rect x="751.5" y="117.2" width="2" height="4.2" fill="none" stroke="#f08c46" stroke-width="1"/><rect x="752" y="117.7" width="1" height="3.2" fill="#5a4030"/><rect x="756" y="114.6" width="1" height="9.4" fill="#f08c46"/><rect x="755" y="117.2" width="3" height="3.4" fill="#f08c46"/><rect x="760" y="111.2" width="1" height="21.2" fill="#f08c46"/><rect x="759.5" y="116.3" width="2" height="14.4" fill="none" stroke="#f08c46" stroke-width="1"/><rect x="760" y="116.8" width="1" height="13.4" fill="#5a4030"/><rect x="764" y="124.8" width="1" height="10.2" fill="#f08c46"/><rect x="763" y="126.5" width="3" height="5.1" fill="#f08c46"/><rect x="769" y="121.4" width="1" height="15.3" fill="#f08c46"/><rect x="768" y="124.0" width="3" height="9.3" fill="#f08c46"/><rect x="773" y="128.2" width="1" height="8.5" fill="#f08c46"/><rect x="772.5" y="129.0" width="2" height="6.0" fill="none" stroke="#f08c46" stroke-width="1"/><rect x="773" y="129.5" width="1" height="5.0" fill="#5a4030"/><rect x="777" y="131.6" width="1" height="5.9" fill="#f08c46"/><rect x="776" y="133.3" width="3" height="1.7" fill="#f08c46"/><rect x="781" y="126.5" width="1" height="10.2" fill="#f08c46"/><rect x="780" y="130.7" width="3" height="3.4" fill="#f08c46"/><rect x="785" y="129.0" width="1" height="20.4" fill="#f08c46"/><rect x="784.5" y="131.6" width="2" height="15.3" fill="none" stroke="#f08c46" stroke-width="1"/><rect x="785" y="132.1" width="1" height="14.3" fill="#5a4030"/><rect x="789" y="137.5" width="1" height="12.8" fill="#f08c46"/><rect x="788" y="140.9" width="3" height="1.7" fill="#f08c46"/><rect x="793" y="134.1" width="1" height="16.2" fill="#f08c46"/><rect x="792" y="141.8" width="3" height="3.4" fill="#f08c46"/><rect x="797" y="124.8" width="1" height="17.0" fill="#f08c46"/><rect x="796" y="127.3" width="3" height="12.8" fill="#f08c46"/><rect x="801" y="124.0" width="1" height="11.0" fill="#f08c46"/><rect x="800" y="128.2" width="3" height="1.7" fill="#f08c46"/><rect x="805" y="121.4" width="1" height="11.9" fill="#f08c46"/><rect x="804" y="123.9" width="3" height="4.3" fill="#f08c46"/><rect x="809" y="94.2" width="1" height="29.7" fill="#f08c46"/><rect x="808" y="101.0" width="3" height="22.1" fill="#f08c46"/><rect x="814" y="98.5" width="1" height="30.5" fill="#f08c46"/><rect x="813.5" y="100.2" width="2" height="25.4" fill="none" stroke="#f08c46" stroke-width="1"/><rect x="814" y="100.7" width="1" height="24.4" fill="#5a4030"/><rect x="818" y="125.6" width="1" height="14.5" fill="#f08c46"/><rect x="817.5" y="127.3" width="2" height="6.0" fill="none" stroke="#f08c46" stroke-width="1"/><rect x="818" y="127.8" width="1" height="5.0" fill="#5a4030"/><rect x="822" y="129.0" width="1" height="10.2" fill="#f08c46"/><rect x="821" y="131.6" width="3" height="1.7" fill="#f08c46"/><rect x="826" y="129.0" width="1" height="10.2" fill="#f08c46"/><rect x="825.5" y="129.9" width="2" height="6.8" fill="none" stroke="#f08c46" stroke-width="1"/><rect x="826" y="130.4" width="1" height="5.8" fill="#5a4030"/><rect x="830" y="135.8" width="1" height="6.8" fill="#f08c46"/><rect x="829" y="136.7" width="3" height="1.5" fill="#f08c46"/><rect x="834" y="112.9" width="1" height="25.5" fill="#f08c46"/><rect x="833" y="118.9" width="3" height="17.8" fill="#f08c46"/><rect x="838" y="101.0" width="1" height="18.7" fill="#f08c46"/><rect x="837" y="103.6" width="3" height="14.4" fill="#f08c46"/><rect x="842" y="95.1" width="1" height="19.5" fill="#f08c46"/><rect x="841" y="96.8" width="3" height="6.8" fill="#f08c46"/><rect x="846" y="75.6" width="1" height="22.9" fill="#f08c46"/><rect x="845" y="80.7" width="3" height="15.2" fill="#f08c46"/><rect x="850" y="73.9" width="1" height="11.0" fill="#f08c46"/><rect x="849" y="75.6" width="3" height="3.4" fill="#f08c46"/><rect x="855" y="68.8" width="1" height="10.2" fill="#f08c46"/><rect x="854" y="71.3" width="3" height="3.4" fill="#f08c46"/><rect x="859" y="57.7" width="1" height="23.8" fill="#f08c46"/><rect x="858" y="62.0" width="3" height="7.6" fill="#f08c46"/><rect x="863" y="57.7" width="1" height="18.7" fill="#f08c46"/><rect x="862" y="60.3" width="3" height="2.5" fill="#f08c46"/><rect x="867" y="50.9" width="1" height="17.9" fill="#f08c46"/><rect x="866.5" y="62.0" width="2" height="4.2" fill="none" stroke="#f08c46" stroke-width="1"/><rect x="867" y="62.5" width="1" height="3.2" fill="#5a4030"/><rect x="871" y="62.0" width="1" height="8.5" fill="#f08c46"/><rect x="870.5" y="65.4" width="2" height="2.5" fill="none" stroke="#f08c46" stroke-width="1"/><rect x="871" y="65.9" width="1" height="1.5" fill="#5a4030"/><rect x="875" y="65.5" width="1" height="7.7" fill="#f08c46"/><rect x="874" y="67.8" width="3" height="1.5" fill="#f08c46"/><rect x="879" y="63.1" width="1" height="7.8" fill="#f08c46"/><rect x="878" y="67.8" width="3" height="2.3" fill="#f08c46"/></g><path d="M11.0,210.5 C12.5,210.9 15.3,213.0 20.2,213.0 C25.1,213.0 33.8,211.3 40.6,210.5 C47.4,209.7 54.8,209.0 61.0,207.9 C67.2,206.8 71.1,205.5 77.9,203.7 C84.7,201.9 93.0,198.5 101.7,196.9 C110.4,195.3 123.0,194.7 130.0,194.3 C137.1,193.9 138.8,194.8 144.0,194.5 C149.2,194.2 153.9,193.8 161.0,192.8 C168.1,191.8 178.1,190.2 186.4,188.6 C194.7,187.0 200.8,184.6 211.0,183.5 C221.2,182.4 240.8,182.2 247.4,181.8 C254.0,181.4 246.8,181.2 250.8,180.9 C254.8,180.6 266.1,179.8 271.2,180.1 C276.3,180.4 275.8,181.8 281.4,182.6 C287.0,183.4 299.1,184.5 305.0,185.2 C310.9,185.9 310.8,186.8 317.0,186.9 C323.2,187.0 335.9,186.2 342.4,186.0 C348.9,185.8 351.2,186.1 356.0,186.0 C360.8,185.9 365.1,185.8 371.3,185.2 C377.5,184.6 386.6,183.0 393.4,182.6 C400.2,182.2 405.2,182.9 412.0,182.5 C418.8,182.1 426.9,181.8 434.0,180.0 C441.1,178.2 448.2,173.9 454.4,171.5 C460.6,169.1 464.6,167.9 471.4,165.5 C478.2,163.1 489.1,158.9 495.0,157.0 C500.9,155.1 500.8,156.5 507.0,154.0 C513.2,151.5 525.3,145.3 532.4,142.2 C539.5,139.1 543.4,137.4 549.4,135.4 C555.4,133.4 562.7,131.2 568.1,130.3 C573.5,129.5 577.2,130.1 581.7,130.3 C586.2,130.5 591.0,131.0 595.2,131.5 C599.4,132.0 601.7,131.8 607.1,133.2 C612.5,134.6 619.8,138.0 627.4,140.0 C635.0,142.0 645.8,143.7 652.9,145.1 C660.0,146.5 664.5,147.8 669.9,148.5 C675.2,149.2 680.5,148.9 685.0,149.3 C689.5,149.7 692.2,150.1 697.0,151.1 C701.8,152.1 708.4,154.8 714.0,155.4 C719.6,156.0 724.7,155.5 730.9,154.5 C737.1,153.5 745.6,150.4 751.3,149.4 C757.0,148.4 760.1,149.2 764.9,148.6 C769.7,148.0 773.2,146.6 780.0,146.0 C786.8,145.4 799.4,146.0 805.6,145.2 C811.8,144.3 812.9,141.6 817.4,140.9 C821.9,140.2 827.0,142.3 832.7,140.9 C838.4,139.5 847.2,134.3 851.4,132.4 C855.6,130.5 853.9,131.5 857.8,129.5 C861.7,127.5 871.4,122.5 875.0,120.6 C878.6,118.7 878.7,118.4 879.4,118.0" fill="none" stroke="#b42222" stroke-width="1.15" stroke-linejoin="round"/><path d="M11.0,228.3 C12.5,228.7 17.8,231.0 20.2,230.8 C22.6,230.7 20.8,230.1 25.3,227.4 C29.8,224.7 42.0,217.4 47.4,214.7 C52.8,212.0 53.3,213.1 57.5,211.3 C61.7,209.5 69.1,206.0 72.8,203.7 C76.5,201.4 76.5,199.7 79.6,197.7 C82.7,195.7 87.1,193.9 91.5,191.8 C95.9,189.7 102.5,185.8 105.9,185.0 C109.3,184.2 105.6,186.4 111.9,186.7 C118.2,187.0 137.8,187.2 144.0,186.9 C150.2,186.7 143.6,185.6 149.0,185.2 C154.4,184.8 170.8,185.0 176.2,184.3 C181.6,183.6 177.6,182.6 181.3,180.9 C185.0,179.2 192.7,175.5 198.3,174.1 C204.0,172.7 209.8,172.5 215.2,172.4 C220.6,172.3 225.4,172.7 230.5,173.3 C235.6,173.9 242.3,175.5 245.7,175.8 C249.1,176.1 247.1,175.1 250.8,175.0 C254.5,174.9 263.3,174.3 267.8,175.0 C272.3,175.7 274.3,177.6 278.0,179.2 C281.7,180.8 284.0,182.5 289.9,184.3 C295.8,186.2 306.2,189.6 313.6,190.3 C321.0,191.0 327.2,189.4 334.0,188.6 C340.8,187.8 348.1,185.6 354.3,185.2 C360.5,184.8 365.6,186.6 371.3,186.0 C377.0,185.4 383.5,183.1 388.3,181.8 C393.1,180.5 394.6,179.1 400.0,178.4 C405.4,177.7 414.8,178.1 420.5,177.4 C426.2,176.7 429.8,176.1 434.0,174.0 C438.2,171.9 442.0,167.5 446.0,164.7 C450.0,161.9 454.7,158.8 457.8,157.0 C460.9,155.2 461.5,155.4 464.6,153.7 C467.7,152.0 471.4,149.6 476.5,146.9 C481.6,144.2 488.5,140.8 495.0,137.5 C501.5,134.2 509.8,130.2 515.5,126.9 C521.2,123.6 525.0,120.2 529.0,117.5 C533.0,114.8 532.4,111.7 539.2,110.4 C546.0,109.1 562.9,109.9 569.8,109.9 C576.7,110.0 577.4,109.4 580.8,110.7 C584.2,112.0 587.0,115.3 590.0,117.5 C593.0,119.7 594.9,121.3 598.6,123.9 C602.3,126.5 607.1,129.8 612.2,133.2 C617.3,136.6 624.0,141.2 629.1,144.2 C634.2,147.2 637.9,149.0 642.7,151.0 C647.5,153.0 651.0,154.8 658.0,156.1 C665.0,157.4 678.5,157.8 685.0,158.7 C691.5,159.6 691.9,160.0 697.0,161.3 C702.1,162.6 711.5,165.8 715.7,166.4 C719.9,167.0 717.0,167.2 722.4,164.7 C727.8,162.1 741.4,154.5 747.9,151.1 C754.4,147.7 756.1,146.1 761.5,144.3 C766.9,142.5 774.1,141.1 780.0,140.5 C785.9,139.9 791.6,142.2 797.0,140.9 C802.4,139.6 807.0,133.7 812.4,132.4 C817.8,131.1 824.8,133.9 829.3,133.3 C833.8,132.7 835.8,131.8 839.5,129.0 C843.2,126.2 848.4,119.4 851.4,116.3 C854.4,113.2 853.9,113.6 857.8,110.2 C861.7,106.8 871.5,98.6 875.0,95.9 C878.5,93.2 878.3,94.3 879.0,94.0" fill="none" stroke="#2016b4" stroke-width="1.2" stroke-linejoin="round"/><rect x="11.5" y="39.5" width="883" height="211.0" fill="none" stroke="#abbbcb" stroke-width="1"/><rect x="11.5" y="256.5" width="883" height="64.0" fill="none" stroke="#abbbcb" stroke-width="1"/><rect x="11.5" y="327.5" width="883" height="74.0" fill="none" stroke="#abbbcb" stroke-width="1"/><rect x="13" y="41" width="274" height="13.5" fill="#3c434b"/><text x="13" y="52" font-family='"Liberation Sans", sans-serif' font-size="12.5" textLength="133" lengthAdjust="spacingAndGlyphs" fill="#2020f0">Exponential_Moving_Average</text><text x="152" y="52" font-family='"Liberation Sans", sans-serif' font-size="12.5" textLength="133" lengthAdjust="spacingAndGlyphs" fill="#e02828">Exponential_Moving_Average</text><rect x="11" y="39" width="31" height="22" fill="#f2f2f2"/><rect x="11" y="39" width="31" height="5" fill="#d0d0d0"/><rect x="15" y="47" width="9.5" height="9.5" rx="1.5" fill="url(#redsq)" stroke="#901010" stroke-width="0.6"/><rect x="28" y="47" width="9.5" height="9.5" rx="1.5" fill="url(#bluesq)" stroke="#105090" stroke-width="0.6"/><rect x="895" y="50" width="3" height="1" fill="#a7b6c6"/><text x="901.5" y="57" font-family='"Liberation Sans", sans-serif' font-size="11" fill="#ffffff">0.9100</text><rect x="895" y="80" width="3" height="1" fill="#a7b6c6"/><text x="901.5" y="87" font-family='"Liberation Sans", sans-serif' font-size="11" fill="#ffffff">0.9050</text><rect x="895" y="110" width="3" height="1" fill="#a7b6c6"/><text x="901.5" y="117" font-family='"Liberation Sans", sans-serif' font-size="11" fill="#ffffff">0.9000</text><rect x="895" y="140" width="3" height="1" fill="#a7b6c6"/><text x="901.5" y="147" font-family='"Liberation Sans", sans-serif' font-size="11" fill="#ffffff">0.8950</text><rect x="895" y="170" width="3" height="1" fill="#a7b6c6"/><text x="901.5" y="177" font-family='"Liberation Sans", sans-serif' font-size="11" fill="#ffffff">0.8900</text><rect x="895" y="201" width="3" height="1" fill="#a7b6c6"/><text x="901.5" y="208" font-family='"Liberation Sans", sans-serif' font-size="11" fill="#ffffff">0.8850</text><rect x="895" y="231" width="3" height="1" fill="#a7b6c6"/><text x="901.5" y="238" font-family='"Liberation Sans", sans-serif' font-size="11" fill="#ffffff">0.8800</text><rect x="894" y="61" width="48" height="20.5" fill="#ffffff"/><text x="902.5" y="75" font-family='"Liberation Sans", sans-serif' font-size="11" fill="#3a3f48">0.9065</text><text x="13.5" y="268" font-family='"Liberation Sans", sans-serif' font-size="11" textLength="28" lengthAdjust="spacingAndGlyphs" fill="#2a8a2a">MACD</text><line x1="12" y1="293.5" x2="895" y2="293.5" stroke="#737e8a" stroke-width="1" stroke-dasharray="3,3" stroke-dashoffset="1"/><rect x="11" y="293" width="1.5" height="1.2" fill="#b42a2a"/><rect x="15" y="293" width="1.5" height="1.2" fill="#b42a2a"/><rect x="19" y="291.3" width="1.5" height="1.9" fill="#c42828"/><rect x="23" y="289.5" width="1.5" height="3.7" fill="#c42828"/><rect x="27" y="287.2" width="1.5" height="6.0" fill="#c42828"/><rect x="31" y="284.5" width="1.5" height="8.7" fill="#c42828"/><rect x="35" y="283.5" width="1.5" height="9.7" fill="#c42828"/><rect x="39" y="282.7" width="1.5" height="10.5" fill="#c42828"/><rect x="43" y="282.7" width="1.5" height="10.5" fill="#c42828"/><rect x="47" y="283.3" width="1.5" height="9.9" fill="#c42828"/><rect x="52" y="285.7" width="1.5" height="7.5" fill="#c42828"/><rect x="56" y="287.8" width="1.5" height="5.4" fill="#c42828"/><rect x="60" y="287.1" width="1.5" height="6.1" fill="#c42828"/><rect x="64" y="287.5" width="1.5" height="5.7" fill="#c42828"/><rect x="68" y="287.2" width="1.5" height="6.0" fill="#c42828"/><rect x="72" y="287.1" width="1.5" height="6.1" fill="#c42828"/><rect x="76" y="287.4" width="1.5" height="5.8" fill="#c42828"/><rect x="80" y="287.5" width="1.5" height="5.7" fill="#c42828"/><rect x="84" y="287.8" width="1.5" height="5.4" fill="#c42828"/><rect x="88" y="288.3" width="1.5" height="4.9" fill="#c42828"/><rect x="93" y="289.1" width="1.5" height="4.1" fill="#c42828"/><rect x="97" y="290.1" width="1.5" height="3.1" fill="#c42828"/><rect x="101" y="291.5" width="1.5" height="1.7" fill="#c42828"/><rect x="105" y="293" width="1.5" height="1.2" fill="#b42a2a"/><rect x="109" y="293.2" width="1.5" height="1.4" fill="#c42828"/><rect x="113" y="293.2" width="1.5" height="4.1" fill="#c42828"/><rect x="117" y="293.2" width="1.5" height="5.3" fill="#c42828"/><rect x="121" y="293.2" width="1.5" height="5.1" fill="#c42828"/><rect x="125" y="293.2" width="1.5" height="4.2" fill="#c42828"/><rect x="129" y="293.2" width="1.5" height="4.1" fill="#c42828"/><rect x="133" y="293.2" width="1.5" height="4.0" fill="#c42828"/><rect x="138" y="293.2" width="1.5" height="4.1" fill="#c42828"/><rect x="142" y="293.2" width="1.5" height="4.2" fill="#c42828"/><rect x="146" y="293.2" width="1.5" height="3.9" fill="#c42828"/><rect x="150" y="293.2" width="1.5" height="2.2" fill="#c42828"/><rect x="154" y="293.2" width="1.5" height="1.6" fill="#c42828"/><rect x="158" y="293.2" width="1.5" height="1.4" fill="#c42828"/><rect x="162" y="293.2" width="1.5" height="1.4" fill="#c42828"/><rect x="166" y="293.2" width="1.5" height="1.3" fill="#c42828"/><rect x="170" y="293.2" width="1.5" height="1.2" fill="#c42828"/><rect x="174" y="293.2" width="1.5" height="1.1" fill="#c42828"/><rect x="179" y="293" width="1.5" height="1.2" fill="#b42a2a"/><rect x="183" y="293" width="1.5" height="1.2" fill="#b42a2a"/><rect x="187" y="291.7" width="1.5" height="1.5" fill="#c42828"/><rect x="191" y="291.4" width="1.5" height="1.8" fill="#c42828"/><rect x="195" y="291.0" width="1.5" height="2.2" fill="#c42828"/><rect x="199" y="291.2" width="1.5" height="2.0" fill="#c42828"/><rect x="203" y="291.8" width="1.5" height="1.4" fill="#c42828"/><rect x="207" y="293" width="1.5" height="1.2" fill="#b42a2a"/><rect x="211" y="293" width="1.5" height="1.2" fill="#b42a2a"/><rect x="215" y="293" width="1.5" height="1.2" fill="#b42a2a"/><rect x="220" y="293.2" width="1.5" height="1.1" fill="#c42828"/><rect x="224" y="293.2" width="1.5" height="2.1" fill="#c42828"/><rect x="228" y="293.2" width="1.5" height="4.5" fill="#c42828"/><rect x="232" y="293.2" width="1.5" height="4.8" fill="#c42828"/><rect x="236" y="293.2" width="1.5" height="4.8" fill="#c42828"/><rect x="240" y="293.2" width="1.5" height="4.8" fill="#c42828"/><rect x="244" y="293.2" width="1.5" height="3.9" fill="#c42828"/><rect x="248" y="293.2" width="1.5" height="1.2" fill="#c42828"/><rect x="252" y="293.2" width="1.5" height="1.1" fill="#c42828"/><rect x="256" y="293.2" width="1.5" height="1.1" fill="#c42828"/><rect x="260" y="293.2" width="1.5" height="1.1" fill="#c42828"/><rect x="265" y="293.2" width="1.5" height="1.0" fill="#c42828"/><rect x="269" y="293.2" width="1.5" height="1.7" fill="#c42828"/><rect x="273" y="293.2" width="1.5" height="2.4" fill="#c42828"/><rect x="277" y="293.2" width="1.5" height="3.0" fill="#c42828"/><rect x="281" y="293.2" width="1.5" height="3.7" fill="#c42828"/><rect x="285" y="293.2" width="1.5" height="4.4" fill="#c42828"/><rect x="289" y="293.2" width="1.5" height="4.8" fill="#c42828"/><rect x="293" y="293.2" width="1.5" height="4.7" fill="#c42828"/><rect x="297" y="293.2" width="1.5" height="3.8" fill="#c42828"/><rect x="301" y="293.2" width="1.5" height="1.9" fill="#c42828"/><rect x="306" y="293.2" width="1.5" height="1.1" fill="#c42828"/><rect x="310" y="293.2" width="1.5" height="1.0" fill="#c42828"/><rect x="314" y="293.2" width="1.5" height="1.0" fill="#c42828"/><rect x="318" y="293" width="1.5" height="1.2" fill="#b42a2a"/><rect x="322" y="293" width="1.5" height="1.2" fill="#b42a2a"/><rect x="326" y="293" width="1.5" height="1.2" fill="#b42a2a"/><rect x="330" y="291.4" width="1.5" height="1.8" fill="#c42828"/><rect x="334" y="290.2" width="1.5" height="3.0" fill="#c42828"/><rect x="338" y="289.9" width="1.5" height="3.3" fill="#c42828"/><rect x="342" y="289.8" width="1.5" height="3.4" fill="#c42828"/><rect x="347" y="290.1" width="1.5" height="3.1" fill="#c42828"/><rect x="351" y="291.1" width="1.5" height="2.1" fill="#c42828"/><rect x="355" y="293" width="1.5" height="1.2" fill="#b42a2a"/><rect x="359" y="293" width="1.5" height="1.2" fill="#b42a2a"/><rect x="363" y="293" width="1.5" height="1.2" fill="#b42a2a"/><rect x="367" y="293" width="1.5" height="1.2" fill="#b42a2a"/><rect x="371" y="293" width="1.5" height="1.2" fill="#b42a2a"/><rect x="375" y="293" width="1.5" height="1.2" fill="#b42a2a"/><rect x="379" y="292.0" width="1.5" height="1.2" fill="#c42828"/><rect x="383" y="291.4" width="1.5" height="1.8" fill="#c42828"/><rect x="387" y="290.9" width="1.5" height="2.3" fill="#c42828"/><rect x="392" y="290.4" width="1.5" height="2.8" fill="#c42828"/><rect x="396" y="290.8" width="1.5" height="2.4" fill="#c42828"/><rect x="400" y="292.2" width="1.5" height="1.0" fill="#c42828"/><rect x="404" y="293" width="1.5" height="1.2" fill="#b42a2a"/><rect x="408" y="293" width="1.5" height="1.2" fill="#b42a2a"/><rect x="412" y="293" width="1.5" height="1.2" fill="#b42a2a"/><rect x="416" y="293" width="1.5" height="1.2" fill="#b42a2a"/><rect x="420" y="293" width="1.5" height="1.2" fill="#b42a2a"/><rect x="424" y="293" width="1.5" height="1.2" fill="#b42a2a"/><rect x="428" y="293" width="1.5" height="1.2" fill="#b42a2a"/><rect x="433" y="293" width="1.5" height="1.2" fill="#b42a2a"/><rect x="437" y="291.9" width="1.5" height="1.3" fill="#c42828"/><rect x="441" y="290.6" width="1.5" height="2.6" fill="#c42828"/><rect x="445" y="288.2" width="1.5" height="5.0" fill="#c42828"/><rect x="449" y="287.3" width="1.5" height="5.9" fill="#c42828"/><rect x="453" y="286.5" width="1.5" height="6.7" fill="#c42828"/><rect x="457" y="287.6" width="1.5" height="5.6" fill="#c42828"/><rect x="461" y="289.1" width="1.5" height="4.1" fill="#c42828"/><rect x="465" y="289.9" width="1.5" height="3.3" fill="#c42828"/><rect x="469" y="290.2" width="1.5" height="3.0" fill="#c42828"/><rect x="474" y="289.4" width="1.5" height="3.8" fill="#c42828"/><rect x="478" y="289.9" width="1.5" height="3.2" fill="#c42828"/><rect x="482" y="291.8" width="1.5" height="1.4" fill="#c42828"/><rect x="486" y="293" width="1.5" height="1.2" fill="#b42a2a"/><rect x="490" y="293" width="1.5" height="1.2" fill="#b42a2a"/><rect x="494" y="293" width="1.5" height="1.2" fill="#b42a2a"/><rect x="498" y="293" width="1.5" height="1.2" fill="#b42a2a"/><rect x="502" y="293" width="1.5" height="1.2" fill="#b42a2a"/><rect x="506" y="293" width="1.5" height="1.2" fill="#b42a2a"/><rect x="510" y="293" width="1.5" height="1.2" fill="#b42a2a"/><rect x="514" y="293" width="1.5" height="1.2" fill="#b42a2a"/><rect x="519" y="293" width="1.5" height="1.2" fill="#b42a2a"/><rect x="523" y="293" width="1.5" height="1.2" fill="#b42a2a"/><rect x="527" y="291.7" width="1.5" height="1.5" fill="#c42828"/><rect x="531" y="291.7" width="1.5" height="1.5" fill="#c42828"/><rect x="535" y="291.7" width="1.5" height="1.5" fill="#c42828"/><rect x="539" y="293" width="1.5" height="1.2" fill="#b42a2a"/><rect x="543" y="293.2" width="1.5" height="1.9" fill="#c42828"/><rect x="547" y="293.2" width="1.5" height="4.4" fill="#c42828"/><rect x="551" y="293.2" width="1.5" height="5.9" fill="#c42828"/><rect x="555" y="293.2" width="1.5" height="7.0" fill="#c42828"/><rect x="560" y="293.2" width="1.5" height="6.9" fill="#c42828"/><rect x="564" y="293.2" width="1.5" height="6.6" fill="#c42828"/><rect x="568" y="293.2" width="1.5" height="6.6" fill="#c42828"/><rect x="572" y="293.2" width="1.5" height="6.7" fill="#c42828"/><rect x="576" y="293.2" width="1.5" height="7.1" fill="#c42828"/><rect x="580" y="293.2" width="1.5" height="7.8" fill="#c42828"/><rect x="584" y="293.2" width="1.5" height="8.7" fill="#c42828"/><rect x="588" y="293.2" width="1.5" height="9.4" fill="#c42828"/><rect x="592" y="293.2" width="1.5" height="11.3" fill="#c42828"/><rect x="596" y="293.2" width="1.5" height="12.2" fill="#c42828"/><rect x="601" y="293.2" width="1.5" height="12.9" fill="#c42828"/><rect x="605" y="293.2" width="1.5" height="13.0" fill="#c42828"/><rect x="609" y="293.2" width="1.5" height="12.5" fill="#c42828"/><rect x="613" y="293.2" width="1.5" height="11.7" fill="#c42828"/><rect x="617" y="293.2" width="1.5" height="10.9" fill="#c42828"/><rect x="621" y="293.2" width="1.5" height="9.7" fill="#c42828"/><rect x="625" y="293.2" width="1.5" height="8.1" fill="#c42828"/><rect x="629" y="293.2" width="1.5" height="6.6" fill="#c42828"/><rect x="633" y="293.2" width="1.5" height="5.2" fill="#c42828"/><rect x="637" y="293.2" width="1.5" height="4.5" fill="#c42828"/><rect x="641" y="293.2" width="1.5" height="3.2" fill="#c42828"/><rect x="646" y="293.2" width="1.5" height="1.8" fill="#c42828"/><rect x="650" y="293" width="1.5" height="1.2" fill="#b42a2a"/><rect x="654" y="293" width="1.5" height="1.2" fill="#b42a2a"/><rect x="658" y="292.0" width="1.5" height="1.2" fill="#c42828"/><rect x="662" y="290.7" width="1.5" height="2.5" fill="#c42828"/><rect x="666" y="290.4" width="1.5" height="2.8" fill="#c42828"/><rect x="670" y="290.1" width="1.5" height="3.1" fill="#c42828"/><rect x="674" y="289.8" width="1.5" height="3.4" fill="#c42828"/><rect x="678" y="289.7" width="1.5" height="3.5" fill="#c42828"/><rect x="682" y="289.7" width="1.5" height="3.5" fill="#c42828"/><rect x="687" y="289.9" width="1.5" height="3.3" fill="#c42828"/><rect x="691" y="290.2" width="1.5" height="3.0" fill="#c42828"/><rect x="695" y="290.4" width="1.5" height="2.8" fill="#c42828"/><rect x="699" y="290.7" width="1.5" height="2.5" fill="#c42828"/><rect x="703" y="291.9" width="1.5" height="1.3" fill="#c42828"/><rect x="707" y="293" width="1.5" height="1.2" fill="#b42a2a"/><rect x="711" y="293" width="1.5" height="1.2" fill="#b42a2a"/><rect x="715" y="293" width="1.5" height="1.2" fill="#b42a2a"/><rect x="719" y="292.1" width="1.5" height="1.1" fill="#c42828"/><rect x="723" y="291.0" width="1.5" height="2.2" fill="#c42828"/><rect x="728" y="289.2" width="1.5" height="4.0" fill="#c42828"/><rect x="732" y="288.0" width="1.5" height="5.2" fill="#c42828"/><rect x="736" y="286.4" width="1.5" height="6.8" fill="#c42828"/><rect x="740" y="284.9" width="1.5" height="8.3" fill="#c42828"/><rect x="744" y="283.4" width="1.5" height="9.8" fill="#c42828"/><rect x="748" y="282.5" width="1.5" height="10.7" fill="#c42828"/><rect x="752" y="283.3" width="1.5" height="9.9" fill="#c42828"/><rect x="756" y="284.3" width="1.5" height="8.9" fill="#c42828"/><rect x="760" y="285.8" width="1.5" height="7.4" fill="#c42828"/><rect x="764" y="287.7" width="1.5" height="5.5" fill="#c42828"/><rect x="769" y="289.7" width="1.5" height="3.5" fill="#c42828"/><rect x="773" y="290.6" width="1.5" height="2.6" fill="#c42828"/><rect x="777" y="293" width="1.5" height="1.2" fill="#b42a2a"/><rect x="781" y="293" width="1.5" height="1.2" fill="#b42a2a"/><rect x="785" y="293.2" width="1.5" height="1.5" fill="#c42828"/><rect x="789" y="293.2" width="1.5" height="2.9" fill="#c42828"/><rect x="793" y="293.2" width="1.5" height="3.3" fill="#c42828"/><rect x="797" y="293.2" width="1.5" height="2.1" fill="#c42828"/><rect x="801" y="293" width="1.5" height="1.2" fill="#b42a2a"/><rect x="805" y="292.3" width="1.5" height="0.9" fill="#c42828"/><rect x="809" y="291.1" width="1.5" height="2.1" fill="#c42828"/><rect x="814" y="293" width="1.5" height="1.2" fill="#b42a2a"/><rect x="818" y="293" width="1.5" height="1.2" fill="#b42a2a"/><rect x="822" y="293" width="1.5" height="1.2" fill="#b42a2a"/><rect x="826" y="293.2" width="1.5" height="1.4" fill="#c42828"/><rect x="830" y="293.2" width="1.5" height="1.9" fill="#c42828"/><rect x="834" y="293.2" width="1.5" height="1.3" fill="#c42828"/><rect x="838" y="293" width="1.5" height="1.2" fill="#b42a2a"/><rect x="842" y="290.7" width="1.5" height="2.5" fill="#c42828"/><rect x="846" y="288.3" width="1.5" height="4.9" fill="#c42828"/><rect x="850" y="286.3" width="1.5" height="6.9" fill="#c42828"/><rect x="855" y="284.3" width="1.5" height="8.9" fill="#c42828"/><rect x="859" y="283.4" width="1.5" height="9.8" fill="#c42828"/><rect x="863" y="284.1" width="1.5" height="9.1" fill="#c42828"/><rect x="867" y="285.5" width="1.5" height="7.7" fill="#c42828"/><rect x="871" y="286.8" width="1.5" height="6.4" fill="#c42828"/><rect x="875" y="288.5" width="1.5" height="4.7" fill="#c42828"/><rect x="879" y="291.8" width="1.5" height="1.4" fill="#c42828"/><path d="M11.4,311.2 C12.8,310.7 16.9,309.7 19.5,308.3 C22.1,306.9 23.9,305.6 27.1,302.6 C30.3,299.6 34.8,293.2 38.6,290.2 C42.4,287.2 45.9,286.1 50.0,284.5 C54.1,282.9 59.3,282.4 63.4,280.6 C67.5,278.9 70.7,275.8 74.8,274.0 C78.9,272.2 84.7,271.0 88.2,270.1 C91.7,269.2 92.7,268.6 95.9,268.8 C99.1,269.0 104.1,269.5 107.3,271.1 C110.5,272.8 111.2,276.6 115.0,278.7 C118.8,280.8 125.1,282.2 130.2,283.5 C135.3,284.8 140.4,285.6 145.5,286.4 C150.6,287.2 155.7,288.0 160.8,288.3 C165.9,288.6 171.6,289.1 176.0,288.3 C180.4,287.5 183.7,284.8 187.5,283.5 C191.3,282.2 195.2,280.9 199.0,280.6 C202.8,280.3 206.6,281.0 210.4,281.6 C214.2,282.2 217.6,282.9 221.9,284.5 C226.2,286.1 232.2,289.8 236.5,291.2 C240.8,292.6 242.8,293.0 247.9,293.1 C253.0,293.2 261.3,291.0 267.0,292.1 C272.7,293.2 277.5,297.6 282.3,299.7 C287.1,301.8 290.9,303.7 295.7,304.5 C300.5,305.3 306.2,305.0 311.0,304.5 C315.8,304.0 319.5,303.4 324.3,301.7 C329.1,299.9 333.9,295.4 339.6,294.0 C345.3,292.6 352.3,293.6 358.7,293.1 C365.1,292.6 371.4,292.6 377.8,291.2 C384.2,289.8 391.8,285.5 396.9,284.8 C402.0,284.1 402.6,286.5 408.3,286.8 C414.0,287.1 426.2,286.8 431.3,286.4 C436.4,286.0 436.2,286.2 438.9,284.5 C441.6,282.8 444.6,278.3 447.6,275.9 C450.7,273.5 452.7,271.3 457.2,270.1 C461.7,268.9 467.7,269.0 474.4,268.8 C481.1,268.6 490.3,268.9 497.3,268.8 C504.3,268.7 511.6,268.8 516.4,268.2 C521.2,267.6 522.7,265.9 525.9,265.0 C529.1,264.1 532.3,262.7 535.5,263.1 C538.7,263.5 541.8,265.5 545.0,267.3 C548.2,269.1 551.1,272.1 554.6,274.0 C558.1,275.9 561.5,276.5 566.0,278.7 C570.5,280.9 576.8,284.1 581.3,287.3 C585.8,290.5 588.3,294.3 592.8,297.8 C597.3,301.3 603.0,305.0 608.1,308.3 C613.2,311.6 618.2,316.2 623.3,317.9 C628.4,319.6 634.1,318.8 638.6,318.5 C643.1,318.2 646.5,316.7 650.1,316.0 C653.7,315.3 655.3,315.9 660.0,314.1 C664.7,312.3 671.4,307.1 678.4,305.4 C685.4,303.7 695.8,303.9 701.9,304.1 C708.0,304.3 709.7,308.0 714.9,306.7 C720.1,305.4 726.6,301.3 733.1,296.3 C739.6,291.3 748.4,280.0 754.0,276.7 C759.6,273.4 762.7,276.1 767.0,276.7 C771.3,277.3 775.7,278.8 780.0,280.1 C784.3,281.4 787.8,284.5 793.0,284.6 C798.2,284.7 806.1,280.8 811.3,280.6 C816.5,280.4 820.4,282.5 824.3,283.2 C828.2,283.9 830.4,286.8 834.7,284.6 C839.0,282.4 845.5,274.6 850.3,270.2 C855.1,265.8 859.4,260.4 863.3,258.5 C867.2,256.6 871.3,258.1 873.8,258.5 C876.3,258.9 877.6,260.7 878.4,261.1" fill="none" stroke="#1f8a1f" stroke-width="1.1" stroke-linejoin="round"/><path d="M11.4,312.7 C12.4,312.8 14.9,313.8 17.5,313.1 C20.1,312.4 23.6,310.2 27.1,308.3 C30.6,306.4 34.8,303.9 38.6,301.7 C42.4,299.5 45.5,297.2 50.0,295.0 C54.5,292.8 60.2,290.9 65.3,288.3 C70.4,285.8 76.1,281.9 80.6,279.7 C85.0,277.5 88.2,276.2 92.0,274.9 C95.8,273.6 100.3,272.3 103.5,272.0 C106.7,271.7 107.9,272.2 111.1,273.0 C114.3,273.8 117.5,275.1 122.6,276.8 C127.7,278.6 135.3,281.9 141.7,283.5 C148.1,285.1 154.4,285.9 160.8,286.4 C167.2,286.9 174.8,286.7 179.9,286.4 C185.0,286.1 187.5,285.1 191.3,284.5 C195.1,283.9 198.3,282.9 202.8,282.6 C207.3,282.3 214.4,282.3 218.1,282.6 C221.8,282.9 222.6,284.0 225.0,284.5 C227.4,285.0 230.4,284.8 232.6,285.4 C234.8,286.0 235.5,287.5 238.4,288.3 C241.3,289.1 245.0,289.7 249.8,290.2 C254.6,290.7 261.6,290.4 267.0,291.2 C272.4,292.0 277.2,293.4 282.3,295.0 C287.4,296.6 293.2,299.3 297.6,300.7 C302.1,302.1 304.6,302.9 309.0,303.2 C313.4,303.5 319.2,303.3 324.3,302.6 C329.4,301.9 333.9,300.1 339.6,298.8 C345.3,297.5 352.3,295.8 358.7,295.0 C365.1,294.2 371.4,295.0 377.8,294.0 C384.2,293.0 390.5,290.1 396.9,289.2 C403.3,288.2 410.3,288.6 416.0,288.3 C421.7,288.0 427.3,287.5 431.3,287.3 C435.3,287.1 435.4,288.9 440.0,287.3 C444.6,285.7 452.7,280.4 459.1,277.8 C465.5,275.2 471.8,273.2 478.2,272.0 C484.6,270.8 490.9,271.2 497.3,270.7 C503.7,270.2 511.6,269.8 516.4,269.2 C521.2,268.6 520.8,267.3 525.9,266.9 C531.0,266.5 541.0,266.2 547.0,266.9 C553.0,267.6 556.5,269.1 562.2,271.1 C567.9,273.1 574.9,275.2 581.3,278.7 C587.7,282.2 594.7,288.0 600.4,292.1 C606.1,296.2 610.6,300.2 615.7,303.6 C620.8,307.0 625.9,310.3 631.0,312.2 C636.1,314.1 641.5,314.5 646.3,315.0 C651.1,315.5 654.2,315.9 660.0,315.0 C665.8,314.1 671.9,310.7 681.0,309.3 C690.1,307.9 706.2,308.2 714.9,306.7 C723.6,305.2 727.9,302.6 733.1,300.2 C738.3,297.8 740.9,295.2 746.1,292.4 C751.3,289.6 759.2,285.2 764.4,283.2 C769.6,281.2 772.2,280.6 777.4,280.6 C782.6,280.6 789.1,282.8 795.6,283.2 C802.1,283.6 810.0,282.8 816.5,283.2 C823.0,283.6 828.6,286.4 834.7,285.3 C840.8,284.2 847.3,279.6 852.9,276.7 C858.5,273.8 864.2,269.8 868.5,267.6 C872.8,265.4 876.8,264.4 878.4,263.7" fill="none" stroke="#d02828" stroke-width="1.25" stroke-linejoin="round"/><rect x="895" y="292.5" width="3" height="1" fill="#a7b6c6"/><text x="903" y="300" font-family='"Liberation Sans", sans-serif' font-size="11" fill="#ffffff">+0.000</text><text x="13.5" y="339" font-family='"Liberation Sans", sans-serif' font-size="10.5" fill="#f08c3c">RSI</text><path d="M11.4,398 L11.4,376.4 L18.5,376.4 L23.3,363.1 L29.0,357.3 L38.6,352.6 L43.3,353.5 L47.2,348.4 L52.9,363.1 L56.7,361.2 L61.5,352.6 L68.2,350.6 L72.0,356.4 L76.8,346.4 L81.5,352.2 L88.2,351.6 L93.0,348.4 L99.7,353.5 L105.4,356.4 L110.2,368.8 L113.0,370.7 L117.8,370.7 L125.5,362.5 L130.2,365.0 L134.1,364.4 L139.8,366.3 L145.5,368.8 L150.3,353.5 L155.1,368.8 L158.9,367.8 L166.5,363.1 L172.2,365.0 L183.7,352.6 L191.3,350.6 L199.0,353.5 L204.7,357.9 L212.4,358.3 L216.2,358.3 L225.7,374.5 L229.8,371.3 L237.4,376.4 L244.1,374.0 L248.3,359.8 L253.6,363.6 L261.3,366.9 L269.9,379.3 L276.6,381.2 L281.3,389.8 L286.1,387.9 L293.4,392.3 L297.6,379.3 L302.3,381.2 L306.7,376.4 L310.9,381.2 L314.8,381.2 L326.2,361.2 L332.0,359.2 L338.6,356.4 L349.1,361.7 L354.9,376.4 L366.3,369.7 L372.1,356.4 L377.8,356.0 L383.5,351.6 L388.3,356.0 L395.9,346.4 L397.8,346.8 L400.7,366.9 L404.5,366.9 L411.2,359.2 L416.9,366.3 L420.8,365.0 L425.5,354.8 L433.2,353.5 L438.9,343.0 L442.7,337.3 L445.7,335.4 L452.4,331.9 L458.1,336.3 L462.0,338.2 L464.8,351.6 L470.6,341.1 L474.4,338.8 L478.2,344.9 L483.9,347.2 L489.7,344.5 L493.5,341.1 L498.3,341.1 L501.1,345.9 L506.8,344.5 L512.6,336.3 L518.3,335.8 L526.9,330.6 L531.7,333.5 L535.5,332.5 L539.3,348.7 L543.1,346.8 L548.9,366.9 L551.7,368.2 L556.5,362.5 L560.3,365.0 L568.0,357.3 L572.7,370.7 L579.4,371.3 L587.1,382.7 L596.6,390.8 L604.2,390.4 L612.8,398.4 L617.6,388.8 L621.4,394.2 L628.1,386.9 L642.2,386.9 L646.0,382.7 L651.8,384.6 L657.5,381.2 L662.3,372.6 L670.9,377.4 L674.7,370.7 L684.2,376.4 L688.1,377.0 L695.7,382.2 L699.5,379.7 L704.3,384.1 L712.0,389.8 L715.8,387.9 L719.6,363.1 L725.3,363.1 L728.2,357.3 L732.0,359.2 L737.7,350.6 L743.6,343.0 L747.4,338.8 L751.2,341.1 L753.1,344.5 L756.0,341.1 L760.8,355.4 L768.4,354.5 L773.2,360.2 L777.0,360.2 L780.8,358.3 L785.6,372.0 L792.3,367.8 L797.1,355.4 L800.9,358.3 L805.7,352.6 L810.4,343.4 L814.3,361.2 L819.0,366.9 L821.9,365.5 L826.7,368.8 L830.5,368.8 L837.2,353.5 L842.9,348.7 L847.7,343.0 L852.5,340.7 L860.1,336.9 L868.7,341.1 L872.5,343.4 L878.2,344.5 L878.2,398 Z" fill="url(#rsifill)" clip-path="url(#rsiclip)"/><rect x="12" y="341.9" width="867" height="1.5" fill="#1c1caa"/><rect x="12" y="393.9" width="867" height="1.5" fill="#1c1caa"/><clipPath id="c_hi"><rect x="0" y="0" width="1152" height="342.6"/></clipPath><clipPath id="c_mid"><rect x="0" y="342.6" width="1152" height="52"/></clipPath><clipPath id="c_lo"><rect x="0" y="394.6" width="1152" height="20"/></clipPath><path d="M11.4,376.4 L18.5,376.4 L23.3,363.1 L29.0,357.3 L38.6,352.6 L43.3,353.5 L47.2,348.4 L52.9,363.1 L56.7,361.2 L61.5,352.6 L68.2,350.6 L72.0,356.4 L76.8,346.4 L81.5,352.2 L88.2,351.6 L93.0,348.4 L99.7,353.5 L105.4,356.4 L110.2,368.8 L113.0,370.7 L117.8,370.7 L125.5,362.5 L130.2,365.0 L134.1,364.4 L139.8,366.3 L145.5,368.8 L150.3,353.5 L155.1,368.8 L158.9,367.8 L166.5,363.1 L172.2,365.0 L183.7,352.6 L191.3,350.6 L199.0,353.5 L204.7,357.9 L212.4,358.3 L216.2,358.3 L225.7,374.5 L229.8,371.3 L237.4,376.4 L244.1,374.0 L248.3,359.8 L253.6,363.6 L261.3,366.9 L269.9,379.3 L276.6,381.2 L281.3,389.8 L286.1,387.9 L293.4,392.3 L297.6,379.3 L302.3,381.2 L306.7,376.4 L310.9,381.2 L314.8,381.2 L326.2,361.2 L332.0,359.2 L338.6,356.4 L349.1,361.7 L354.9,376.4 L366.3,369.7 L372.1,356.4 L377.8,356.0 L383.5,351.6 L388.3,356.0 L395.9,346.4 L397.8,346.8 L400.7,366.9 L404.5,366.9 L411.2,359.2 L416.9,366.3 L420.8,365.0 L425.5,354.8 L433.2,353.5 L438.9,343.0 L442.7,337.3 L445.7,335.4 L452.4,331.9 L458.1,336.3 L462.0,338.2 L464.8,351.6 L470.6,341.1 L474.4,338.8 L478.2,344.9 L483.9,347.2 L489.7,344.5 L493.5,341.1 L498.3,341.1 L501.1,345.9 L506.8,344.5 L512.6,336.3 L518.3,335.8 L526.9,330.6 L531.7,333.5 L535.5,332.5 L539.3,348.7 L543.1,346.8 L548.9,366.9 L551.7,368.2 L556.5,362.5 L560.3,365.0 L568.0,357.3 L572.7,370.7 L579.4,371.3 L587.1,382.7 L596.6,390.8 L604.2,390.4 L612.8,398.4 L617.6,388.8 L621.4,394.2 L628.1,386.9 L642.2,386.9 L646.0,382.7 L651.8,384.6 L657.5,381.2 L662.3,372.6 L670.9,377.4 L674.7,370.7 L684.2,376.4 L688.1,377.0 L695.7,382.2 L699.5,379.7 L704.3,384.1 L712.0,389.8 L715.8,387.9 L719.6,363.1 L725.3,363.1 L728.2,357.3 L732.0,359.2 L737.7,350.6 L743.6,343.0 L747.4,338.8 L751.2,341.1 L753.1,344.5 L756.0,341.1 L760.8,355.4 L768.4,354.5 L773.2,360.2 L777.0,360.2 L780.8,358.3 L785.6,372.0 L792.3,367.8 L797.1,355.4 L800.9,358.3 L805.7,352.6 L810.4,343.4 L814.3,361.2 L819.0,366.9 L821.9,365.5 L826.7,368.8 L830.5,368.8 L837.2,353.5 L842.9,348.7 L847.7,343.0 L852.5,340.7 L860.1,336.9 L868.7,341.1 L872.5,343.4 L878.2,344.5" fill="none" stroke="#f0962e" stroke-width="1" clip-path="url(#c_mid)"/><path d="M11.4,376.4 L18.5,376.4 L23.3,363.1 L29.0,357.3 L38.6,352.6 L43.3,353.5 L47.2,348.4 L52.9,363.1 L56.7,361.2 L61.5,352.6 L68.2,350.6 L72.0,356.4 L76.8,346.4 L81.5,352.2 L88.2,351.6 L93.0,348.4 L99.7,353.5 L105.4,356.4 L110.2,368.8 L113.0,370.7 L117.8,370.7 L125.5,362.5 L130.2,365.0 L134.1,364.4 L139.8,366.3 L145.5,368.8 L150.3,353.5 L155.1,368.8 L158.9,367.8 L166.5,363.1 L172.2,365.0 L183.7,352.6 L191.3,350.6 L199.0,353.5 L204.7,357.9 L212.4,358.3 L216.2,358.3 L225.7,374.5 L229.8,371.3 L237.4,376.4 L244.1,374.0 L248.3,359.8 L253.6,363.6 L261.3,366.9 L269.9,379.3 L276.6,381.2 L281.3,389.8 L286.1,387.9 L293.4,392.3 L297.6,379.3 L302.3,381.2 L306.7,376.4 L310.9,381.2 L314.8,381.2 L326.2,361.2 L332.0,359.2 L338.6,356.4 L349.1,361.7 L354.9,376.4 L366.3,369.7 L372.1,356.4 L377.8,356.0 L383.5,351.6 L388.3,356.0 L395.9,346.4 L397.8,346.8 L400.7,366.9 L404.5,366.9 L411.2,359.2 L416.9,366.3 L420.8,365.0 L425.5,354.8 L433.2,353.5 L438.9,343.0 L442.7,337.3 L445.7,335.4 L452.4,331.9 L458.1,336.3 L462.0,338.2 L464.8,351.6 L470.6,341.1 L474.4,338.8 L478.2,344.9 L483.9,347.2 L489.7,344.5 L493.5,341.1 L498.3,341.1 L501.1,345.9 L506.8,344.5 L512.6,336.3 L518.3,335.8 L526.9,330.6 L531.7,333.5 L535.5,332.5 L539.3,348.7 L543.1,346.8 L548.9,366.9 L551.7,368.2 L556.5,362.5 L560.3,365.0 L568.0,357.3 L572.7,370.7 L579.4,371.3 L587.1,382.7 L596.6,390.8 L604.2,390.4 L612.8,398.4 L617.6,388.8 L621.4,394.2 L628.1,386.9 L642.2,386.9 L646.0,382.7 L651.8,384.6 L657.5,381.2 L662.3,372.6 L670.9,377.4 L674.7,370.7 L684.2,376.4 L688.1,377.0 L695.7,382.2 L699.5,379.7 L704.3,384.1 L712.0,389.8 L715.8,387.9 L719.6,363.1 L725.3,363.1 L728.2,357.3 L732.0,359.2 L737.7,350.6 L743.6,343.0 L747.4,338.8 L751.2,341.1 L753.1,344.5 L756.0,341.1 L760.8,355.4 L768.4,354.5 L773.2,360.2 L777.0,360.2 L780.8,358.3 L785.6,372.0 L792.3,367.8 L797.1,355.4 L800.9,358.3 L805.7,352.6 L810.4,343.4 L814.3,361.2 L819.0,366.9 L821.9,365.5 L826.7,368.8 L830.5,368.8 L837.2,353.5 L842.9,348.7 L847.7,343.0 L852.5,340.7 L860.1,336.9 L868.7,341.1 L872.5,343.4 L878.2,344.5" fill="none" stroke="#c838d8" stroke-width="1" clip-path="url(#c_hi)"/><path d="M11.4,376.4 L18.5,376.4 L23.3,363.1 L29.0,357.3 L38.6,352.6 L43.3,353.5 L47.2,348.4 L52.9,363.1 L56.7,361.2 L61.5,352.6 L68.2,350.6 L72.0,356.4 L76.8,346.4 L81.5,352.2 L88.2,351.6 L93.0,348.4 L99.7,353.5 L105.4,356.4 L110.2,368.8 L113.0,370.7 L117.8,370.7 L125.5,362.5 L130.2,365.0 L134.1,364.4 L139.8,366.3 L145.5,368.8 L150.3,353.5 L155.1,368.8 L158.9,367.8 L166.5,363.1 L172.2,365.0 L183.7,352.6 L191.3,350.6 L199.0,353.5 L204.7,357.9 L212.4,358.3 L216.2,358.3 L225.7,374.5 L229.8,371.3 L237.4,376.4 L244.1,374.0 L248.3,359.8 L253.6,363.6 L261.3,366.9 L269.9,379.3 L276.6,381.2 L281.3,389.8 L286.1,387.9 L293.4,392.3 L297.6,379.3 L302.3,381.2 L306.7,376.4 L310.9,381.2 L314.8,381.2 L326.2,361.2 L332.0,359.2 L338.6,356.4 L349.1,361.7 L354.9,376.4 L366.3,369.7 L372.1,356.4 L377.8,356.0 L383.5,351.6 L388.3,356.0 L395.9,346.4 L397.8,346.8 L400.7,366.9 L404.5,366.9 L411.2,359.2 L416.9,366.3 L420.8,365.0 L425.5,354.8 L433.2,353.5 L438.9,343.0 L442.7,337.3 L445.7,335.4 L452.4,331.9 L458.1,336.3 L462.0,338.2 L464.8,351.6 L470.6,341.1 L474.4,338.8 L478.2,344.9 L483.9,347.2 L489.7,344.5 L493.5,341.1 L498.3,341.1 L501.1,345.9 L506.8,344.5 L512.6,336.3 L518.3,335.8 L526.9,330.6 L531.7,333.5 L535.5,332.5 L539.3,348.7 L543.1,346.8 L548.9,366.9 L551.7,368.2 L556.5,362.5 L560.3,365.0 L568.0,357.3 L572.7,370.7 L579.4,371.3 L587.1,382.7 L596.6,390.8 L604.2,390.4 L612.8,398.4 L617.6,388.8 L621.4,394.2 L628.1,386.9 L642.2,386.9 L646.0,382.7 L651.8,384.6 L657.5,381.2 L662.3,372.6 L670.9,377.4 L674.7,370.7 L684.2,376.4 L688.1,377.0 L695.7,382.2 L699.5,379.7 L704.3,384.1 L712.0,389.8 L715.8,387.9 L719.6,363.1 L725.3,363.1 L728.2,357.3 L732.0,359.2 L737.7,350.6 L743.6,343.0 L747.4,338.8 L751.2,341.1 L753.1,344.5 L756.0,341.1 L760.8,355.4 L768.4,354.5 L773.2,360.2 L777.0,360.2 L780.8,358.3 L785.6,372.0 L792.3,367.8 L797.1,355.4 L800.9,358.3 L805.7,352.6 L810.4,343.4 L814.3,361.2 L819.0,366.9 L821.9,365.5 L826.7,368.8 L830.5,368.8 L837.2,353.5 L842.9,348.7 L847.7,343.0 L852.5,340.7 L860.1,336.9 L868.7,341.1 L872.5,343.4 L878.2,344.5" fill="none" stroke="#38d038" stroke-width="1" clip-path="url(#c_lo)"/><path d="M612.8,398.4 L617.6,388.8 L621.4,394.2" fill="none" stroke="#40d040" stroke-width="1"/><rect x="895" y="328" width="3" height="1" fill="#a7b6c6"/><text x="901.5" y="335" font-family='"Liberation Sans", sans-serif' font-size="11" fill="#ffffff">80</text><rect x="895" y="354" width="3" height="1" fill="#a7b6c6"/><text x="901.5" y="361" font-family='"Liberation Sans", sans-serif' font-size="11" fill="#ffffff">60</text><rect x="895" y="380" width="3" height="1" fill="#a7b6c6"/><text x="901.5" y="387" font-family='"Liberation Sans", sans-serif' font-size="11" fill="#ffffff">40</text><rect x="39" y="399" width="1" height="6" fill="#a7b6c6"/><text x="38.5" y="424" text-anchor="middle" font-family='"Liberation Sans", sans-serif' font-size="11" fill="#ffffff">8</text><rect x="64" y="399" width="1" height="6" fill="#a7b6c6"/><text x="63.5" y="424" text-anchor="middle" font-family='"Liberation Sans", sans-serif' font-size="11" fill="#ffffff">11</text><rect x="88" y="399" width="1" height="6" fill="#a7b6c6"/><text x="87.5" y="424" text-anchor="middle" font-family='"Liberation Sans", sans-serif' font-size="11" fill="#ffffff">12</text><rect x="113" y="399" width="1" height="6" fill="#a7b6c6"/><text x="112.5" y="424" text-anchor="middle" font-family='"Liberation Sans", sans-serif' font-size="11" fill="#ffffff">13</text><rect x="138" y="399" width="1" height="6" fill="#a7b6c6"/><text x="137.5" y="424" text-anchor="middle" font-family='"Liberation Sans", sans-serif' font-size="11" fill="#ffffff">14</text><rect x="162" y="399" width="1" height="6" fill="#a7b6c6"/><text x="161.5" y="424" text-anchor="middle" font-family='"Liberation Sans", sans-serif' font-size="11" fill="#ffffff">15</text><rect x="187" y="399" width="1" height="6" fill="#a7b6c6"/><text x="186.5" y="424" text-anchor="middle" font-family='"Liberation Sans", sans-serif' font-size="11" fill="#ffffff">18</text><rect x="211" y="399" width="1" height="6" fill="#a7b6c6"/><text x="210.5" y="424" text-anchor="middle" font-family='"Liberation Sans", sans-serif' font-size="11" fill="#ffffff">19</text><rect x="236" y="399" width="1" height="6" fill="#a7b6c6"/><text x="235.5" y="424" text-anchor="middle" font-family='"Liberation Sans", sans-serif' font-size="11" fill="#ffffff">20</text><rect x="261" y="399" width="1" height="6" fill="#a7b6c6"/><text x="260.5" y="424" text-anchor="middle" font-family='"Liberation Sans", sans-serif' font-size="11" fill="#ffffff">21</text><rect x="285" y="399" width="1" height="6" fill="#a7b6c6"/><text x="284.5" y="424" text-anchor="middle" font-family='"Liberation Sans", sans-serif' font-size="11" fill="#ffffff">22</text><rect x="310" y="399" width="1" height="6" fill="#a7b6c6"/><text x="309.5" y="424" text-anchor="middle" font-family='"Liberation Sans", sans-serif' font-size="11" fill="#ffffff">25</text><rect x="334" y="399" width="1" height="6" fill="#a7b6c6"/><text x="333.5" y="424" text-anchor="middle" font-family='"Liberation Sans", sans-serif' font-size="11" fill="#ffffff">26</text><rect x="359" y="399" width="1" height="6" fill="#a7b6c6"/><text x="358.5" y="424" text-anchor="middle" font-family='"Liberation Sans", sans-serif' font-size="11" fill="#ffffff">27</text><rect x="383" y="399" width="1" height="6" fill="#a7b6c6"/><text x="382.5" y="424" text-anchor="middle" font-family='"Liberation Sans", sans-serif' font-size="11" fill="#ffffff">28</text><rect x="408" y="399" width="1" height="6" fill="#a7b6c6"/><text x="407.5" y="424" text-anchor="middle" font-family='"Liberation Sans", sans-serif' font-size="11" fill="#ffffff">29</text><rect x="433" y="399" width="1" height="6" fill="#a7b6c6"/><text x="432.5" y="424" text-anchor="middle" font-family='"Liberation Sans", sans-serif' font-size="11" fill="#ffffff">1</text><rect x="457" y="399" width="1" height="6" fill="#a7b6c6"/><text x="456.5" y="424" text-anchor="middle" font-family='"Liberation Sans", sans-serif' font-size="11" fill="#ffffff">2</text><rect x="482" y="399" width="1" height="6" fill="#a7b6c6"/><text x="481.5" y="424" text-anchor="middle" font-family='"Liberation Sans", sans-serif' font-size="11" fill="#ffffff">3</text><rect x="506" y="399" width="1" height="6" fill="#a7b6c6"/><text x="505.5" y="424" text-anchor="middle" font-family='"Liberation Sans", sans-serif' font-size="11" fill="#ffffff">4</text><rect x="531" y="399" width="1" height="6" fill="#a7b6c6"/><text x="530.5" y="424" text-anchor="middle" font-family='"Liberation Sans", sans-serif' font-size="11" fill="#ffffff">5</text><rect x="556" y="399" width="1" height="6" fill="#a7b6c6"/><text x="555.5" y="424" text-anchor="middle" font-family='"Liberation Sans", sans-serif' font-size="11" fill="#ffffff">8</text><rect x="580" y="399" width="1" height="6" fill="#a7b6c6"/><text x="579.5" y="424" text-anchor="middle" font-family='"Liberation Sans", sans-serif' font-size="11" fill="#ffffff">9</text><rect x="605" y="399" width="1" height="6" fill="#a7b6c6"/><text x="604.5" y="424" text-anchor="middle" font-family='"Liberation Sans", sans-serif' font-size="11" fill="#ffffff">10</text><rect x="629" y="399" width="1" height="6" fill="#a7b6c6"/><text x="628.5" y="424" text-anchor="middle" font-family='"Liberation Sans", sans-serif' font-size="11" fill="#ffffff">11</text><rect x="654" y="399" width="1" height="6" fill="#a7b6c6"/><text x="653.5" y="424" text-anchor="middle" font-family='"Liberation Sans", sans-serif' font-size="11" fill="#ffffff">12</text><rect x="679" y="399" width="1" height="6" fill="#a7b6c6"/><text x="678.5" y="424" text-anchor="middle" font-family='"Liberation Sans", sans-serif' font-size="11" fill="#ffffff">15</text><rect x="703" y="399" width="1" height="6" fill="#a7b6c6"/><text x="702.5" y="424" text-anchor="middle" font-family='"Liberation Sans", sans-serif' font-size="11" fill="#ffffff">16</text><rect x="728" y="399" width="1" height="6" fill="#a7b6c6"/><text x="727.5" y="424" text-anchor="middle" font-family='"Liberation Sans", sans-serif' font-size="11" fill="#ffffff">17</text><rect x="752" y="399" width="1" height="6" fill="#a7b6c6"/><text x="751.5" y="424" text-anchor="middle" font-family='"Liberation Sans", sans-serif' font-size="11" fill="#ffffff">18</text><rect x="777" y="399" width="1" height="6" fill="#a7b6c6"/><text x="776.5" y="424" text-anchor="middle" font-family='"Liberation Sans", sans-serif' font-size="11" fill="#ffffff">19</text><rect x="801" y="399" width="1" height="6" fill="#a7b6c6"/><text x="800.5" y="424" text-anchor="middle" font-family='"Liberation Sans", sans-serif' font-size="11" fill="#ffffff">22</text><rect x="826" y="399" width="1" height="6" fill="#a7b6c6"/><text x="825.5" y="424" text-anchor="middle" font-family='"Liberation Sans", sans-serif' font-size="11" fill="#ffffff">23</text><rect x="851" y="399" width="1" height="6" fill="#a7b6c6"/><text x="850.5" y="424" text-anchor="middle" font-family='"Liberation Sans", sans-serif' font-size="11" fill="#ffffff">24</text><rect x="875" y="399" width="1" height="6" fill="#a7b6c6"/><text x="874.5" y="424" text-anchor="middle" font-family='"Liberation Sans", sans-serif' font-size="11" fill="#ffffff">25</text><rect x="11" y="378" width="2" height="27" fill="#d6e6ea"/><rect x="433" y="39.5" width="1" height="339" fill="#a6b6c6"/><rect x="433" y="378" width="2" height="27" fill="#d6e6ea"/><rect x="12.5" y="378.5" width="60.5" height="19" rx="2" fill="url(#datebox)" stroke="#c2d2dc" stroke-width="1"/><text x="19" y="392" font-family='"Liberation Sans", sans-serif' font-size="11.5" textLength="45" lengthAdjust="spacingAndGlyphs" fill="#ffffff">Янв 2021</text><rect x="434.5" y="378.5" width="61" height="19" rx="2" fill="url(#datebox)" stroke="#c2d2dc" stroke-width="1"/><text x="442" y="392" font-family='"Liberation Sans", sans-serif' font-size="11.5" textLength="45" lengthAdjust="spacingAndGlyphs" fill="#ffffff">Фев 2021</text><g fill="none" stroke="#3c4652" stroke-width="1.1" stroke-linecap="round" stroke-linejoin="round"><path d="M4.6,9.5 V23.4 H18.4"/><path d="M3.2,11 L4.6,9.5 L6,11 M17,22 L18.4,23.4 L17,24.8"/><path d="M8.3,14 V21.8 M12.5,9 V18.7 M16.4,12.1 V20.8"/></g><rect x="7.3" y="16" width="2" height="3.9" fill="#a8d8a8" stroke="#3c4652" stroke-width="0.9"/><rect x="11.5" y="11" width="2" height="5.6" fill="#98d098" stroke="#3c4652" stroke-width="0.9"/><rect x="15.4" y="14" width="2" height="5.9" fill="#c89098" stroke="#3c4652" stroke-width="0.9"/><text x="24" y="21.8" font-family='"Liberation Sans", sans-serif' font-size="12" textLength="143" lengthAdjust="spacingAndGlyphs" xml:space="preserve" fill="#4c5260">График USD /CHF  4 ЧАСА</text><rect x="851.5" y="9.5" width="30" height="16" rx="2" fill="url(#btn)" stroke="#8e9cac" stroke-width="1"/><rect x="884.5" y="9.5" width="30" height="16" rx="2" fill="url(#btn)" stroke="#8e9cac" stroke-width="1"/><rect x="917.5" y="9.5" width="30" height="16" rx="2" fill="url(#btn)" stroke="#8e9cac" stroke-width="1"/><rect x="861.3" y="17.6" width="10.2" height="4" rx="1" fill="#ffffff" stroke="#333a44" stroke-width="1.1"/><rect x="894.5" y="13.5" width="10" height="8.5" rx="1" fill="#ffffff" stroke="#333a44" stroke-width="1.2"/><rect x="897.5" y="16.5" width="4" height="2.5" fill="#ffffff" stroke="#333a44" stroke-width="1"/><path d="M928.3,14.3 L936.7,21.3 M936.7,14.3 L928.3,21.3" stroke="#333a44" stroke-width="4.2" stroke-linecap="square"/><path d="M928.3,14.3 L936.7,21.3 M936.7,14.3 L928.3,21.3" stroke="#ffffff" stroke-width="2" stroke-linecap="square"/></svg>
</body></html>
